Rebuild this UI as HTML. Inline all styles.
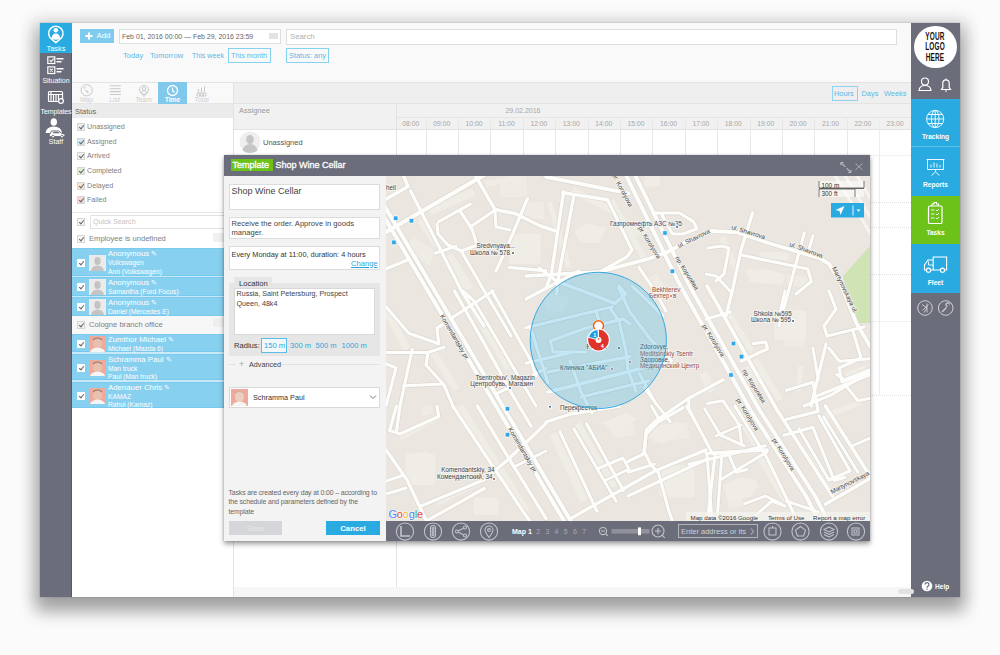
<!DOCTYPE html>
<html><head><meta charset="utf-8">
<style>
*{margin:0;padding:0;box-sizing:border-box}
html,body{width:1000px;height:655px;overflow:hidden;background:#fbfbfb;font-family:"Liberation Sans",sans-serif;}
.a{position:absolute}
#win{position:absolute;left:40px;top:23px;width:920px;height:574px;background:#fff;box-shadow:0 11px 16px 4px rgba(0,0,0,0.30),0 2px 14px 8px rgba(0,0,0,0.09),0 0 1px rgba(0,0,0,0.4);}
.sb{background:#6b6d7a}
.wt{color:#fff;font-weight:bold;text-align:center}
.lbl{font-size:7px}
.gray{color:#7a7a7a}
.chk{position:absolute;width:8px;height:8px;border:1px solid #d6d6d6;background:#f0f0f0}
.chk:after{content:"";position:absolute;left:2px;top:0px;width:2px;height:4px;border:solid #666;border-width:0 1px 1px 0;transform:rotate(40deg)}
.row{position:absolute;left:72px;width:152px;background:#88d0f0;border-top:1px solid #7acbee;border-bottom:1px solid #78c9ee}
.row .t{position:absolute;left:36px;color:#fff;font-size:7.5px;line-height:8.6px;white-space:nowrap}
.av{position:absolute;left:17px;width:17px;height:16px;background:#e9e9e9}
.hcol{position:absolute;top:117px;height:480px;border-left:1px solid #e6e6e6;}
.ht{position:absolute;top:119px;font-size:7px;color:#a0a0a0;width:32px;text-align:center}
</style></head><body>
<div id="win"></div>

<!-- LEFT SIDEBAR -->
<div class="a sb" style="left:40px;top:23px;width:32px;height:574px"></div>
<div class="a" style="left:40px;top:23px;width:32px;height:30px;background:#29abe2"></div>
<div class="a" style="left:71px;top:53px;width:1px;height:544px;background:#575965"></div>
<svg class="a" style="left:40px;top:23px" width="34" height="125">
 <path d="M15.85 19.6 L12.2 16.6 A7.2 7.2 0 1 1 19.5 16.6 Z" fill="none" stroke="#fff" stroke-width="1.5" stroke-linejoin="round"/>
 <circle cx="15.85" cy="7.3" r="2.3" fill="#fff"/>
 <path d="M11.6 15.2 q0.6-4.6 4.25-4.6 q3.65 0 4.25 4.6 q-2 1.6-4.25 1.6 q-2.25 0-4.25-1.6z" fill="#fff"/>
 <g fill="none" stroke="#fff" stroke-width="1.2">
  <rect x="7.8" y="33.9" width="7" height="6.6"/><path d="M9.6 37l1.6 1.6l2.6-3" stroke-width="1.1"/>
  <rect x="7.8" y="43.9" width="7" height="6.6"/><path d="M9.8 45.9l3 2.6M12.8 45.9l-3 2.6" stroke-width="1.1"/>
 </g>
 <g fill="#fff"><rect x="16.5" y="35" width="7" height="1.5"/><rect x="16.5" y="38" width="5" height="1.5"/><rect x="16.5" y="45" width="7" height="1.5"/><rect x="16.5" y="48" width="5" height="1.5"/></g>
 <g fill="none" stroke="#fff" stroke-width="1.2">
  <rect x="8.5" y="68.5" width="14" height="10" rx="1"/>
  <path d="M8.5 71.5h14M11 69v9.5M13.5 72v6.5M16 72v6.5M18.5 72v6.5"/>
  <circle cx="21" cy="78" r="2.4" fill="#6b6d7a"/>
 </g>
 <ellipse cx="13.8" cy="99" rx="3.2" ry="3.8" fill="#fff"/>
 <path d="M5.5 110 q0.8-6.5 8.3-6.5 q7.5 0 8.3 6.5z" fill="#fff"/>
 <path d="M9.5 111.5 l2.2-3.6 h7 l3.2 2.6 l3 0.7 v2.3 h-15.4z" fill="#fff" stroke="#6b6d7a" stroke-width="0.9"/>
 <path d="M12.5 110.3 l1.2-1.6 h4.5 l1.8 1.6z" fill="#6b6d7a"/>
 <circle cx="13" cy="113.6" r="1.3" fill="#fff" stroke="#6b6d7a" stroke-width="0.8"/><circle cx="22" cy="113.6" r="1.3" fill="#fff" stroke="#6b6d7a" stroke-width="0.8"/>
</svg>
<div class="a wt" style="left:36px;top:44px;width:40px;font-size:7.4px;line-height:9px;font-weight:normal">Tasks</div>
<div class="a wt" style="left:36px;top:76px;width:40px;font-size:7px;line-height:9px;font-weight:normal">Situation</div>
<div class="a wt" style="left:36px;top:106.5px;width:40px;font-size:7px;line-height:9px;font-weight:normal;letter-spacing:-0.1px">Templates</div>
<div class="a wt" style="left:36px;top:136.5px;width:40px;font-size:7px;line-height:9px;font-weight:normal">Staff</div>

<!-- RIGHT SIDEBAR -->
<div class="a sb" style="left:911px;top:23px;width:49px;height:574px"></div>
<div class="a" style="left:913.8px;top:25.5px;width:42.8px;height:42.8px;border-radius:50%;background:#fff"></div>
<div class="a" style="left:915px;top:32px;width:40px;text-align:center;font-size:10.4px;line-height:10.3px;font-weight:bold;color:#111;transform:scaleX(0.62);letter-spacing:0.3px">YOUR<br>LOGO<br>HERE</div>
<svg class="a" style="left:911px;top:75px" width="49" height="20" fill="none" stroke="#fff" stroke-width="1.2">
 <circle cx="14" cy="6.5" r="3.5"/><path d="M8 15.5 q0.5-5 6-5 q5.5 0 6 5z"/>
 <path d="M30.5 14.5 h9 l-1.3-2 v-4.5 a3.2 3.2 0 0 0 -6.4 0 v4.5 z"/><path d="M35 3.5v1.2M34 16h2"/>
</svg>
<div class="a" style="left:911px;top:99px;width:49px;height:48px;background:#29abe2;border-bottom:1px solid #5bc0eb"></div>
<div class="a" style="left:911px;top:147px;width:49px;height:49px;background:#29abe2"></div>
<div class="a" style="left:911px;top:196px;width:49px;height:48px;background:#6cc218"></div>
<div class="a" style="left:911px;top:244px;width:49px;height:49px;background:#29abe2"></div>
<svg class="a" style="left:911px;top:99px" width="49" height="220" fill="none" stroke="#fff" stroke-width="0.9">
 <circle cx="24.2" cy="20" r="8.6"/><ellipse cx="24.2" cy="20" rx="3.8" ry="8.6"/><path d="M24.2 11.4v17.2M15.6 20h17.2M16.8 15.5h14.8M16.8 24.5h14.8"/>
 <path d="M15.5 60.5h18M16.5 60.5v10h16v-10M24.5 70.5v2.5l-4 3.5M24.5 73l4 3.5M20 68.5v-3M23 68.5v-5M26 68.5v-4M29 68.5v-2.5"/>
 <rect x="17.5" y="107" width="13.5" height="17.5" rx="1.3" stroke-width="1.2"/><path d="M21 107v-2h2v-1.5h2.5v1.5h2v2" stroke-width="1.1"/>
 <path d="M20 111h3.5M20 115h3.5M20 119h3.5M25 111l1 1l2-2M25 115l1 1l2-2M25 119l1 1l2-2"/>
 <path d="M22.2 158h13.4v13h-13.4zM22.2 161h-5.2l-3.5 5v5h8.7" stroke-width="1.1"/><path d="M17.5 162.5v3.5h4.7"/>
 <circle cx="17.5" cy="171.2" r="2.1" fill="#29abe2" stroke-width="1.1"/><circle cx="31.5" cy="171.2" r="2.1" fill="#29abe2" stroke-width="1.1"/>
 <circle cx="14" cy="209" r="7.3" stroke="#d0d1d6" stroke-width="1"/><circle cx="34.7" cy="209" r="7.3" stroke="#d0d1d6" stroke-width="1"/>
 <path d="M11 205.5l5 3.5l-3 4.5M16 204.5v9M11.5 211.5l6-6" stroke="#d0d1d6"/>
 <path d="M31 213l4.5-4.5M36.5 207.5a1.8 1.8 0 1 1 2 -2" stroke="#d0d1d6" stroke-width="1.3"/>
</svg>
<div class="a wt" style="left:911px;top:132px;width:49px;font-size:6.6px;line-height:9px">Tracking</div>
<div class="a wt" style="left:911px;top:180px;width:49px;font-size:6.6px;line-height:9px">Reports</div>
<div class="a wt" style="left:911px;top:228px;width:49px;font-size:6.6px;line-height:9px">Tasks</div>
<div class="a wt" style="left:911px;top:278px;width:49px;font-size:6.6px;line-height:9px">Fleet</div>
<svg class="a" style="left:921px;top:580px" width="12" height="12"><circle cx="6" cy="6" r="5.3" fill="#fff"/><path d="M4 4.6a2 2 0 1 1 2.8 1.8c-0.6 0.3-0.8 0.7-0.8 1.4" stroke="#6b6d7a" stroke-width="1.2" fill="none"/><circle cx="6" cy="9.2" r="0.7" fill="#6b6d7a"/></svg>
<div class="a wt" style="left:935px;top:582px;font-size:6.6px;line-height:9px;text-align:left">Help</div>

<!-- TOP TOOLBAR -->
<div class="a" style="left:72px;top:23px;width:839px;height:59px;background:#f9f9f9"></div>
<div class="a" style="left:80px;top:29px;width:34px;height:14px;background:#7fcbee"></div>
<svg class="a" style="left:84px;top:31px" width="10" height="10"><path d="M5 1.5V8.5M1.5 5H8.5" stroke="#fff" stroke-width="2"/></svg>
<div class="a" style="left:96.5px;top:31px;font-size:7.8px;color:#fff;line-height:9px">Add</div>
<div class="a" style="left:119px;top:29px;width:162px;height:15px;background:#fff;border:1px solid #dedede"></div>
<div class="a" style="left:122px;top:32px;font-size:6.95px;color:#666;line-height:9px;white-space:nowrap">Feb 01, 2016 00:00 — Feb 29, 2016 23:59</div>
<div class="a" style="left:269px;top:33px;width:9px;height:6px;background:#e3e3e3"></div>
<div class="a" style="left:286px;top:29px;width:611px;height:16px;background:#fff;border:1px solid #dedede"></div>
<div class="a" style="left:290px;top:32px;font-size:7.8px;color:#b0b0b0;line-height:9px">Search</div>
<div class="a" style="left:123px;top:51px;font-size:7.6px;color:#5cb9e6;line-height:9px;white-space:nowrap">Today</div>
<div class="a" style="left:150px;top:51px;font-size:7.6px;color:#5cb9e6;line-height:9px;white-space:nowrap">Tomorrow</div>
<div class="a" style="left:192px;top:51.6px;font-size:7.1px;color:#5cb9e6;line-height:9px;white-space:nowrap">This week</div>
<div class="a" style="left:228px;top:48px;width:43px;height:15px;border:1px solid #86d0f0"></div>
<div class="a" style="left:231px;top:51px;font-size:7.3px;color:#5cb9e6;line-height:9px;white-space:nowrap">This month</div>
<div class="a" style="left:286px;top:48px;width:43px;height:15px;border:1px solid #86d0f0"></div>
<div class="a" style="left:289px;top:51px;font-size:7.4px;color:#5cb9e6;line-height:9px;white-space:nowrap">Status: any</div>

<!-- TAB BAR / PANEL -->
<div class="a" style="left:72px;top:82px;width:162px;height:515px;background:#fff;border-top:1px solid #e4e4e4"></div>
<div class="a" style="left:72px;top:82px;width:161px;height:22px;background:#f9f9f9;border-top:1px solid #e4e4e4;border-bottom:1px solid #e6e6e6"></div>
<div class="a" style="left:158px;top:82px;width:29px;height:22px;background:#80c8ec"></div>
<svg class="a" style="left:72px;top:83.5px" width="161" height="22">
 <g fill="none" stroke="#c9c9c9" stroke-width="1">
  <circle cx="14.7" cy="6.3" r="5.6"/><path d="M12 4.2l1.5-0.8M13.2 6.2l2.3 1.4l0.8 2" stroke-width="1.3"/>
  <path d="M37.8 1.8h11M37.8 4.7h11M37.8 7.6h11M37.8 10.5h11" stroke-width="1.1"/>
  <circle cx="72" cy="6" r="4.5"/><circle cx="72" cy="5" r="1.6"/><path d="M69.5 9a2.5 2.5 0 0 1 5 0M70 10.5l2 2l2-2"/>
  <path d="M126.5 5v3M129.5 3.5v4.5M132.5 2.5v5.5M125 9h3v3h-3zM128 9h3v3h-3zM131 9h3v3h-3z"/>
 </g>
 <g fill="none" stroke="#fff" stroke-width="1.3">
  <circle cx="100.5" cy="6.5" r="5"/><path d="M100.5 3.5v3l2 2"/>
 </g>
</svg>
<div class="a" style="left:72px;top:95.5px;width:29px;text-align:center;font-size:6.8px;color:#cfcfcf;line-height:8px">Map</div>
<div class="a" style="left:100px;top:95.5px;width:29px;text-align:center;font-size:6.8px;color:#cfcfcf;line-height:8px">List</div>
<div class="a" style="left:129px;top:95.5px;width:29px;text-align:center;font-size:6.8px;color:#cfcfcf;line-height:8px">Team</div>
<div class="a" style="left:158px;top:95.5px;width:29px;text-align:center;font-size:6.8px;color:#fff;line-height:8px;font-weight:bold">Time</div>
<div class="a" style="left:187px;top:95.5px;width:29px;text-align:center;font-size:6.8px;color:#cfcfcf;line-height:8px">Total</div>
<div class="a" style="left:72px;top:104px;width:161px;height:14px;background:#ebebeb"></div>
<div class="a" style="left:75px;top:107px;font-size:7.5px;color:#666;line-height:9px">Status</div>
<div class="chk" style="left:77px;top:123.0px;background:#ececec"></div>
<div class="a" style="left:87px;top:123.1px;font-size:7.15px;color:#808080;line-height:9px">Unassigned</div>
<div class="chk" style="left:77px;top:137.5px;background:#cfe9f7"></div>
<div class="a" style="left:87px;top:137.6px;font-size:7.15px;color:#808080;line-height:9px">Assigned</div>
<div class="chk" style="left:77px;top:152.0px;background:#eeeeee"></div>
<div class="a" style="left:87px;top:152.1px;font-size:7.15px;color:#808080;line-height:9px">Arrived</div>
<div class="chk" style="left:77px;top:166.5px;background:#def0d4"></div>
<div class="a" style="left:87px;top:166.6px;font-size:7.15px;color:#808080;line-height:9px">Completed</div>
<div class="chk" style="left:77px;top:181.5px;background:#f9e3d2"></div>
<div class="a" style="left:87px;top:181.6px;font-size:7.15px;color:#808080;line-height:9px">Delayed</div>
<div class="chk" style="left:77px;top:196.0px;background:#f7d9d3"></div>
<div class="a" style="left:87px;top:196.1px;font-size:7.15px;color:#808080;line-height:9px">Failed</div>
<div class="a" style="left:72px;top:212px;width:161px;height:1px;background:#e6e6e6"></div>
<div class="chk" style="left:77px;top:218px;background:#f6f6f6"></div>
<div class="a" style="left:90px;top:215px;width:143px;height:14px;background:#fff;border:1px solid #e2e2e2"></div>
<div class="a" style="left:93px;top:218px;font-size:7.1px;color:#c4c4c4;line-height:9px">Quick Search</div>
<div class="chk" style="left:77px;top:234.5px;background:#f6f6f6"></div>
<div class="a" style="left:89px;top:234px;font-size:7.6px;color:#808080;line-height:9px">Employee is undefined</div>
<div class="a" style="left:72px;top:248px;width:152px;height:159.5px;background:#c9e9f8"></div>
<div class="row" style="top:248.0px;height:27.5px"><div class="chk" style="left:5px;top:9.8px;background:#fff;border-color:#fff"></div><svg class="a" style="left:17px;top:5.8px" width="17" height="16"><rect width="17" height="16" fill="#ebebeb"/><ellipse cx="8.5" cy="6" rx="3.2" ry="4" fill="#c4c4c4"/><path d="M2 16q0.5-5 6.5-5.5q6 0.5 6.5 5.5z" fill="#c4c4c4"/></svg><div class="t" style="font-size:7.8px;top:1.3px">Anonymous <span style="font-size:7px">&#9998;</span></div><div class="t" style="font-size:6.7px;top:10.0px">Volkswagen</div><div class="t" style="font-size:6.7px;top:18.7px">Ann (Volkswagen)</div></div>
<div class="row" style="top:277.0px;height:18.5px"><div class="chk" style="left:5px;top:5.2px;background:#fff;border-color:#fff"></div><svg class="a" style="left:17px;top:1.2px" width="17" height="16"><rect width="17" height="16" fill="#ebebeb"/><ellipse cx="8.5" cy="6" rx="3.2" ry="4" fill="#c4c4c4"/><path d="M2 16q0.5-5 6.5-5.5q6 0.5 6.5 5.5z" fill="#c4c4c4"/></svg><div class="t" style="font-size:7.8px;top:1.3px">Anonymous <span style="font-size:7px">&#9998;</span></div><div class="t" style="font-size:6.7px;top:10.0px">Samantha (Ford Focus)</div></div>
<div class="row" style="top:297.0px;height:18.5px"><div class="chk" style="left:5px;top:5.2px;background:#fff;border-color:#fff"></div><svg class="a" style="left:17px;top:1.2px" width="17" height="16"><rect width="17" height="16" fill="#ebebeb"/><ellipse cx="8.5" cy="6" rx="3.2" ry="4" fill="#c4c4c4"/><path d="M2 16q0.5-5 6.5-5.5q6 0.5 6.5 5.5z" fill="#c4c4c4"/></svg><div class="t" style="font-size:7.8px;top:1.3px">Anonymous <span style="font-size:7px">&#9998;</span></div><div class="t" style="font-size:6.7px;top:10.0px">Daniel (Mercedes E)</div></div>
<div class="row" style="top:333.5px;height:18.0px"><div class="chk" style="left:5px;top:5.0px;background:#fff;border-color:#fff"></div><svg class="a" style="left:17px;top:1.0px" width="17" height="16"><rect width="17" height="16" fill="#f0a99a"/><ellipse cx="8.5" cy="7" rx="4.5" ry="5.5" fill="#e8c0b0"/><path d="M4 4.5q4.5-4 9 0v-1.5q-4.5-3-9 0z" fill="#8a7565"/><path d="M1 16q1-4 7.5-4.5q6.5 0.5 7.5 4.5z" fill="#f5f5f5"/></svg><div class="t" style="font-size:7.8px;top:1.3px">Zumthor Michael <span style="font-size:7px">&#9998;</span></div><div class="t" style="font-size:6.7px;top:10.0px">Michael (Mazda 6)</div></div>
<div class="row" style="top:353.5px;height:26.0px"><div class="chk" style="left:5px;top:9.0px;background:#fff;border-color:#fff"></div><svg class="a" style="left:17px;top:5.0px" width="17" height="16"><rect width="17" height="16" fill="#f0a99a"/><ellipse cx="8.5" cy="7" rx="4.5" ry="5.5" fill="#e8c0b0"/><path d="M4 4.5q4.5-4 9 0v-1.5q-4.5-3-9 0z" fill="#8a7565"/><path d="M1 16q1-4 7.5-4.5q6.5 0.5 7.5 4.5z" fill="#f5f5f5"/></svg><div class="t" style="font-size:7.8px;top:1.3px">Schramma Paul <span style="font-size:7px">&#9998;</span></div><div class="t" style="font-size:6.7px;top:10.0px">Man truck</div><div class="t" style="font-size:6.7px;top:18.7px">Paul (Man truck)</div></div>
<div class="row" style="top:381.5px;height:26.0px"><div class="chk" style="left:5px;top:9.0px;background:#fff;border-color:#fff"></div><svg class="a" style="left:17px;top:5.0px" width="17" height="16"><rect width="17" height="16" fill="#f0a99a"/><ellipse cx="8.5" cy="7" rx="4.5" ry="5.5" fill="#e8c0b0"/><path d="M4 4.5q4.5-4 9 0v-1.5q-4.5-3-9 0z" fill="#8a7565"/><path d="M1 16q1-4 7.5-4.5q6.5 0.5 7.5 4.5z" fill="#f5f5f5"/></svg><div class="t" style="font-size:7.8px;top:1.3px">Adenauer Chris <span style="font-size:7px">&#9998;</span></div><div class="t" style="font-size:6.7px;top:10.0px">KAMAZ</div><div class="t" style="font-size:6.7px;top:18.7px">Rahul (Kamaz)</div></div>
<div class="a" style="left:72px;top:315.5px;width:152px;height:18px;background:#f7f7f7"></div>
<div class="a" style="left:213px;top:318px;width:11px;height:9px;background:#eeeeee"></div>
<div class="a" style="left:213px;top:233px;width:11px;height:9px;background:#f0f0f0"></div>
<div class="chk" style="left:77px;top:320.5px;background:#f0f0f0"></div>
<div class="a" style="left:89px;top:320px;font-size:7.6px;color:#808080;line-height:9px">Cologne branch office</div>
<!-- TIMELINE -->
<div class="a" style="left:233px;top:82px;width:678px;height:22px;background:#efefef;border-top:1px solid #e2e2e2;border-left:1px solid #e2e2e2;border-bottom:1px solid #e4e4e4"></div>
<div class="a" style="left:831.5px;top:85.5px;width:26px;height:15px;border:1px solid #8fd3f1"></div>
<div class="a" style="left:834px;top:88.5px;font-size:7.4px;color:#5cb9e6;line-height:9px">Hours</div>
<div class="a" style="left:861.5px;top:88.5px;font-size:7.4px;color:#5cb9e6;line-height:9px">Days</div>
<div class="a" style="left:884px;top:88.5px;font-size:7.4px;color:#5cb9e6;line-height:9px">Weeks</div>
<div class="a" style="left:233px;top:104px;width:678px;height:26px;background:#f1f1f1;border-bottom:1px solid #e2e2e2;border-left:1px solid #e2e2e2"></div>
<div class="a" style="left:396px;top:117px;width:515px;height:1px;background:#e4e4e4"></div>
<div class="a" style="left:239px;top:106px;font-size:7.5px;color:#9a9a9a;line-height:9px">Assignee</div>
<div class="a" style="left:500px;top:106px;width:46px;font-size:7px;color:#a8a8a8;line-height:9px;text-align:center">29.02.2016</div>
<div class="a" style="left:396px;top:104px;width:1px;height:493px;background:#e2e2e2"></div>
<div class="a" style="left:396.0px;top:119.5px;width:29.5px;text-align:center;font-size:6.8px;color:#a8a8a8;line-height:8px">08:00</div>
<div class="a" style="left:425.5px;top:117px;width:1px;height:38px;background:#e8e8e8"></div>
<div class="a" style="left:425.5px;top:119.5px;width:32.4px;text-align:center;font-size:6.8px;color:#a8a8a8;line-height:8px">09:00</div>
<div class="a" style="left:457.9px;top:117px;width:1px;height:38px;background:#e8e8e8"></div>
<div class="a" style="left:457.9px;top:119.5px;width:32.4px;text-align:center;font-size:6.8px;color:#a8a8a8;line-height:8px">10:00</div>
<div class="a" style="left:490.3px;top:117px;width:1px;height:38px;background:#e8e8e8"></div>
<div class="a" style="left:490.3px;top:119.5px;width:32.4px;text-align:center;font-size:6.8px;color:#a8a8a8;line-height:8px">11:00</div>
<div class="a" style="left:522.7px;top:117px;width:1px;height:38px;background:#e8e8e8"></div>
<div class="a" style="left:522.7px;top:119.5px;width:32.4px;text-align:center;font-size:6.8px;color:#a8a8a8;line-height:8px">12:00</div>
<div class="a" style="left:555.1px;top:117px;width:1px;height:38px;background:#e8e8e8"></div>
<div class="a" style="left:555.1px;top:119.5px;width:32.4px;text-align:center;font-size:6.8px;color:#a8a8a8;line-height:8px">13:00</div>
<div class="a" style="left:587.5px;top:117px;width:1px;height:38px;background:#e8e8e8"></div>
<div class="a" style="left:587.5px;top:119.5px;width:32.4px;text-align:center;font-size:6.8px;color:#a8a8a8;line-height:8px">14:00</div>
<div class="a" style="left:619.9px;top:117px;width:1px;height:38px;background:#e8e8e8"></div>
<div class="a" style="left:619.9px;top:119.5px;width:32.4px;text-align:center;font-size:6.8px;color:#a8a8a8;line-height:8px">15:00</div>
<div class="a" style="left:652.3px;top:117px;width:1px;height:38px;background:#e8e8e8"></div>
<div class="a" style="left:652.3px;top:119.5px;width:32.4px;text-align:center;font-size:6.8px;color:#a8a8a8;line-height:8px">16:00</div>
<div class="a" style="left:684.7px;top:117px;width:1px;height:38px;background:#e8e8e8"></div>
<div class="a" style="left:684.7px;top:119.5px;width:32.4px;text-align:center;font-size:6.8px;color:#a8a8a8;line-height:8px">17:00</div>
<div class="a" style="left:717.1px;top:117px;width:1px;height:38px;background:#e8e8e8"></div>
<div class="a" style="left:717.1px;top:119.5px;width:32.4px;text-align:center;font-size:6.8px;color:#a8a8a8;line-height:8px">18:00</div>
<div class="a" style="left:749.5px;top:117px;width:1px;height:38px;background:#e8e8e8"></div>
<div class="a" style="left:749.5px;top:119.5px;width:32.4px;text-align:center;font-size:6.8px;color:#a8a8a8;line-height:8px">19:00</div>
<div class="a" style="left:781.9px;top:117px;width:1px;height:38px;background:#e8e8e8"></div>
<div class="a" style="left:781.9px;top:119.5px;width:32.4px;text-align:center;font-size:6.8px;color:#a8a8a8;line-height:8px">20:00</div>
<div class="a" style="left:814.3px;top:117px;width:1px;height:38px;background:#e8e8e8"></div>
<div class="a" style="left:814.3px;top:119.5px;width:32.4px;text-align:center;font-size:6.8px;color:#a8a8a8;line-height:8px">21:00</div>
<div class="a" style="left:846.7px;top:117px;width:1px;height:38px;background:#e8e8e8"></div>
<div class="a" style="left:846.7px;top:119.5px;width:32.4px;text-align:center;font-size:6.8px;color:#a8a8a8;line-height:8px">22:00</div>
<div class="a" style="left:879.1px;top:117px;width:1px;height:38px;background:#e8e8e8"></div>
<div class="a" style="left:879.1px;top:119.5px;width:31.9px;text-align:center;font-size:6.8px;color:#a8a8a8;line-height:8px">23:00</div>
<div class="a" style="left:878.8px;top:117px;width:1px;height:278px;background:#ececec"></div>
<div class="a" style="left:233px;top:202.0px;width:678px;height:0;border-top:1px dotted #e2e2e2"></div>
<div class="a" style="left:233px;top:227.0px;width:678px;height:0;border-top:1px dotted #e2e2e2"></div>
<div class="a" style="left:233px;top:274.0px;width:678px;height:0;border-top:1px dotted #e2e2e2"></div>
<div class="a" style="left:233px;top:321.0px;width:678px;height:0;border-top:1px dotted #e2e2e2"></div>
<div class="a" style="left:233px;top:394.6px;width:678px;height:0;border-top:1px dotted #e2e2e2"></div>

<div class="a" style="left:233px;top:155px;width:678px;height:1px;background:#f0f0f0"></div>
<svg class="a" style="left:239px;top:131px" width="22" height="22"><circle cx="11" cy="11" r="10.5" fill="#efefef"/><ellipse cx="11" cy="8.5" rx="3.8" ry="4.6" fill="#c6c6c6"/><path d="M3.5 19.5q1-6 7.5-6.5q6.5 0.5 7.5 6.5q-3 2.5-7.5 2.5q-4.5 0-7.5-2.5z" fill="#c6c6c6"/></svg>
<div class="a" style="left:263px;top:138px;font-size:7.5px;color:#555;line-height:9px">Unassigned</div>
<div class="a" style="left:233px;top:587px;width:678px;height:10px;background:#f6f6f6"></div>
<div class="a" style="left:233px;top:130px;width:1px;height:467px;background:#e4e4e4"></div>
<div class="a" style="left:898px;top:588.5px;width:16px;height:5px;border-radius:3px;background:#e2e2e2"></div>

<!-- MODAL -->
<div class="a" style="left:224px;top:155px;width:646px;height:386px;background:#f3f3f3;box-shadow:0 3px 5px rgba(0,0,0,0.38),0 0 2px rgba(0,0,0,0.2)"></div>
<div class="a sb" style="left:224px;top:155px;width:646px;height:21px"></div>
<div class="a" style="left:231px;top:159px;width:42px;height:12px;background:#6cc117"></div>
<div class="a" style="left:232.5px;top:160px;font-size:9px;color:#fff;line-height:11px;white-space:nowrap;-webkit-text-stroke:0.3px #fff">Template</div>
<div class="a" style="left:275.5px;top:160px;font-size:9px;color:#fff;line-height:11px;white-space:nowrap;-webkit-text-stroke:0.3px #fff">Shop Wine Cellar</div>
<svg class="a" style="left:838px;top:159px" width="30" height="16"><g stroke="#b4b6bf" stroke-width="1.1" fill="none"><path d="M2.8 3.5l4.6 4.5M2.8 3.5v2.8M2.8 3.5h2.8M8.6 9.2l4.4 4.3M13 13.5v-2.8M13 13.5h-2.8"/><path d="M17.5 4.4l7 6.6M24.5 4.4l-7 6.6" stroke-width="0.9"/></g></svg>
<!-- form -->
<div class="a" style="left:228.5px;top:183.5px;width:151px;height:26px;background:#fff;border:1px solid #dcdcdc"></div>
<div class="a" style="left:231.5px;top:186px;font-size:9px;color:#444;line-height:11px;white-space:nowrap">Shop Wine Cellar</div>
<div class="a" style="left:228.5px;top:217px;width:151px;height:21.5px;background:#fff;border:1px solid #dcdcdc"></div>
<div class="a" style="left:231.5px;top:219px;width:146px;font-size:7.6px;color:#444;line-height:9.2px">Receive the order. Approve in goods manager.</div>
<div class="a" style="left:228.5px;top:246px;width:151px;height:24px;background:#fff;border:1px solid #dcdcdc"></div>
<div class="a" style="left:231.5px;top:249.5px;font-size:7.35px;color:#333;line-height:9px;white-space:nowrap">Every Monday at 11:00, duration: 4 hours</div>
<div class="a" style="left:351px;top:258.5px;font-size:7.6px;color:#2ea6dd;line-height:9px;text-decoration:underline">Change</div>
<div class="a" style="left:228.5px;top:282.5px;width:151px;height:73px;background:#e6e6e6"></div>
<div class="a" style="left:234px;top:277px;width:37.5px;height:7px;background:#e6e6e6"></div>
<div class="a" style="left:239px;top:278.5px;font-size:7.6px;color:#333;line-height:9px">Location</div>
<div class="a" style="left:234px;top:288px;width:140.5px;height:46.5px;background:#fff;border:1px solid #d8d8d8"></div>
<div class="a" style="left:236.5px;top:290px;width:138px;font-size:7.15px;color:#444;line-height:9.5px;white-space:nowrap">Russia, Saint Petersburg, Prospect<br>Queen, 48k4</div>
<div class="a" style="left:234px;top:341px;font-size:7.6px;color:#333;line-height:9px">Radius:</div>
<div class="a" style="left:261px;top:337.5px;width:26px;height:15px;border:1px solid #5cbde8;background:#f2f7fa"></div>
<div class="a" style="left:264px;top:341px;font-size:7.6px;color:#2ea6dd;line-height:9px;white-space:nowrap">150 m</div>
<div class="a" style="left:290px;top:341px;font-size:7.6px;color:#2ea6dd;line-height:9px;white-space:nowrap">300 m</div>
<div class="a" style="left:315.5px;top:341px;font-size:7.6px;color:#2ea6dd;line-height:9px;white-space:nowrap">500 m</div>
<div class="a" style="left:341.5px;top:341px;font-size:7.6px;color:#2ea6dd;line-height:9px;white-space:nowrap">1000 m</div>
<div class="a" style="left:229px;top:364px;width:150px;height:1px;background:#e2e2e2"></div>
<div class="a" style="left:236px;top:360px;width:45px;height:9px;background:#f3f3f3"></div>
<div class="a" style="left:239px;top:359.5px;font-size:9px;color:#aaa;line-height:9px">+</div>
<div class="a" style="left:249px;top:360px;font-size:7.2px;color:#444;line-height:9px">Advanced</div>
<div class="a" style="left:228.5px;top:387px;width:151px;height:20.5px;background:#fff;border:1px solid #d8d8d8"></div>
<svg class="a" style="left:231px;top:389px" width="17" height="17"><rect width="17" height="17" fill="#f0a99a"/><ellipse cx="8.5" cy="7.5" rx="4.5" ry="5.5" fill="#eccfc2"/><path d="M4 5q4.5-4 9 0v-1.5q-4.5-3-9 0z" fill="#bdb4ad"/><path d="M1 17q1-4 7.5-4.5q6.5 0.5 7.5 4.5z" fill="#f5f5f5"/></svg>
<div class="a" style="left:253px;top:393px;font-size:7.25px;color:#333;line-height:9px">Schramma Paul</div>
<svg class="a" style="left:369px;top:394px" width="8" height="6"><path d="M1 1.5l3 3l3-3" stroke="#777" stroke-width="1" fill="none"/></svg>
<div class="a" style="left:228.5px;top:487.8px;font-size:6.9px;color:#666;line-height:9.4px;white-space:nowrap;letter-spacing:-0.12px">Tasks are created every day at 0:00 – according to<br>the schedule and parameters defined by the<br>template</div>
<div class="a" style="left:228.5px;top:521px;width:53.5px;height:14px;background:#d5d6da"></div>
<div class="a" style="left:228.5px;top:523.5px;width:53.5px;text-align:center;font-size:7.5px;color:#e8e8ea;line-height:9px">Save</div>
<div class="a" style="left:326px;top:521px;width:54px;height:14px;background:#29abe2"></div>
<div class="a" style="left:326px;top:523.5px;width:54px;text-align:center;font-size:7.8px;color:#fff;line-height:9px;font-weight:bold">Cancel</div>
<!-- MAP -->
<svg class="a" style="left:386px;top:176px" width="484" height="345" viewBox="0 0 484 345" font-family="Liberation Sans, sans-serif">
<rect width="484" height="345" fill="#ebe7e0"/>
<path d="M114.0 4.0 L141.0 4.0 L141.0 21.0 L114.0 21.0 Z" fill="#efece6"/>
<path d="M136.0 26.0 L158.0 26.0 L158.0 43.0 L136.0 43.0 Z" fill="#efece6"/>
<path d="M125.0 58.0 L148.0 58.0 L148.0 86.0 L125.0 86.0 Z" fill="#efece6"/>
<path d="M27.0 60.0 L48.0 75.0 L44.0 90.0 L22.0 75.0 Z" fill="#efece6"/>
<path d="M63.0 83.0 L82.0 112.0 L76.0 116.0 L58.0 88.0 Z" fill="#efece6"/>
<path d="M258.0 104.0 L270.0 98.0 L278.0 108.0 L268.0 114.0 Z" fill="#efece6"/>
<path d="M240.0 52.0 L260.0 43.0 L264.0 55.0 L244.0 63.0 Z" fill="#efece6"/>
<path d="M398.0 150.0 L420.0 152.0 L418.0 172.0 L398.0 170.0 Z" fill="#efece6"/>
<path d="M402.0 98.0 L422.0 102.0 L419.0 112.0 L400.0 108.0 Z" fill="#efece6"/>
<path d="M360.0 94.0 L370.0 93.0 L372.0 100.0 L362.0 101.0 Z" fill="#efece6"/>
<path d="M20.0 280.0 L40.0 275.0 L45.0 300.0 L24.0 305.0 Z" fill="#efece6"/>
<path d="M35.0 232.0 L45.0 229.0 L47.0 237.0 L37.0 240.0 Z" fill="#efece6"/>
<path d="M285.0 292.0 L308.0 290.0 L308.0 308.0 L286.0 310.0 Z" fill="#efece6"/>
<path d="M225.0 246.0 L245.0 239.0 L249.0 258.0 L227.0 263.0 Z" fill="#efece6"/>
<path d="M265.0 250.0 L300.0 246.0 L304.0 262.0 L268.0 266.0 Z" fill="#efece6"/>
<path d="M340.0 318.0 L355.0 313.0 L357.0 330.0 L343.0 333.0 Z" fill="#efece6"/>
<path d="M43.9 35.1 L87.8 15.8" stroke="#f0ede7" stroke-width="8.0" fill="none"/>
<path d="M33.4 43.9 L51.0 70.2" stroke="#f0ede7" stroke-width="6.0" fill="none"/>
<path d="M63.2 79.0 L84.3 112.4" stroke="#f0ede7" stroke-width="7.0" fill="none"/>
<path d="M186.3 14.0 L226.7 35.1" stroke="#f0ede7" stroke-width="6.0" fill="none"/>
<path d="M163.5 26.3 L182.8 91.3" stroke="#f0ede7" stroke-width="5.0" fill="none"/>
<path d="M225.0 24.6 L258.4 82.5" stroke="#f0ede7" stroke-width="6.0" fill="none"/>
<path d="M335.8 61.5 L351.6 96.6" stroke="#f0ede7" stroke-width="6.0" fill="none"/>
<path d="M86.0 129.0 L123.0 192.3" stroke="#f0ede7" stroke-width="8.0" fill="none"/>
<path d="M0.0 134.0 L21.0 173.0" stroke="#f0ede7" stroke-width="7.0" fill="none"/>
<path d="M47.4 176.5 L70.2 213.4" stroke="#f0ede7" stroke-width="7.0" fill="none"/>
<path d="M73.8 230.0 L140.5 335.4" stroke="#f0ede7" stroke-width="7.0" fill="none"/>
<path d="M14.0 261.6 L52.7 240.5" stroke="#f0ede7" stroke-width="6.0" fill="none"/>
<path d="M51.0 326.6 L98.3 303.8" stroke="#f0ede7" stroke-width="6.0" fill="none"/>
<path d="M167.0 258.0 L198.6 324.8" stroke="#f0ede7" stroke-width="8.0" fill="none"/>
<path d="M191.6 247.6 L228.5 310.8" stroke="#f0ede7" stroke-width="6.0" fill="none"/>
<path d="M342.8 137.8 L365.7 174.7" stroke="#f0ede7" stroke-width="6.0" fill="none"/>
<path d="M369.0 183.5 L393.7 223.9" stroke="#f0ede7" stroke-width="6.0" fill="none"/>
<path d="M346.3 230.0 L371.0 270.4" stroke="#f0ede7" stroke-width="6.0" fill="none"/>
<path d="M372.7 279.0 L402.5 328.3" stroke="#f0ede7" stroke-width="7.0" fill="none"/>
<path d="M421.8 279.0 L443.0 314.3" stroke="#f0ede7" stroke-width="7.0" fill="none"/>
<path d="M440.0 240.0 L475.0 226.0" stroke="#f0ede7" stroke-width="6.0" fill="none"/>
<path d="M415.0 190.0 L412.0 215.0" stroke="#f0ede7" stroke-width="5.0" fill="none"/>
<path d="M460.0 200.0 L480.0 192.0" stroke="#f0ede7" stroke-width="6.0" fill="none"/>
<path d="M100.0 8.0 L140.0 0.0" stroke="#f0ede7" stroke-width="6.0" fill="none"/>
<path d="M258.4 0.0 L274.2 0.0 L274.2 10.5 L258.4 10.5 Z" fill="#f0ede7"/>
<path d="M188.0 55.0 L200.0 47.4 L219.7 52.0 L214.0 66.7 L195.0 66.7 Z" fill="#f0ede7"/>
<path d="M374.4 75.5 L402.5 77.0 L402.5 84.3 L374.4 83.0 Z" fill="#f0ede7"/>
<path d="M360.4 96.0 L380.0 93.0 L399.0 99.0 L396.0 108.9 L364.0 106.0 Z" fill="#f0ede7"/>
<path d="M19.3 277.4 L49.2 277.4 L49.2 309.0 L19.3 309.0 Z" fill="#f0ede7"/>
<path d="M87.8 321.3 L112.4 321.3 L112.4 338.9 L87.8 338.9 Z" fill="#f0ede7"/>
<path d="M216.2 247.0 L240.0 237.0 L251.3 243.0 L228.0 258.0 Z" fill="#f0ede7"/>
<path d="M265.4 255.8 L290.0 245.8 L300.5 252.0 L276.0 268.6 Z" fill="#f0ede7"/>
<path d="M276.0 289.7 L307.5 289.7 L307.5 321.3 L276.0 321.3 Z" fill="#f0ede7"/>
<path d="M388.5 134.3 L420.0 134.3 L420.0 164.2 L388.5 164.2 Z" fill="#f0ede7"/>
<path d="M337.6 313.0 L360.0 303.8 L374.4 310.0 L350.0 324.8 Z" fill="#f0ede7"/>
<path d="M123.0 58.0 L154.5 58.0 L154.5 87.8 L123.0 87.8 Z" fill="#f0ede7"/>
<path d="M158.0 122.0 L170.0 116.0 L184.0 122.0 L176.0 136.0 L160.0 134.0 Z" fill="#f0ede7"/>
<path d="M263.1 259.2 L273.7 248.6 L284.3 251.3 L294.8 246.0 L300.1 251.3 L286.9 261.8 L268.4 267.1 Z" fill="#f0ede7"/>
<path d="M273.7 290.9 L308.1 290.9 L308.1 320.0 L273.7 320.0 Z" fill="#f0ede7"/>
<path d="M337.1 309.4 L353.0 301.5 L371.5 304.1 L366.2 320.0 L342.4 325.2 Z" fill="#f0ede7"/>
<path d="M313.3 198.4 L321.3 195.8 L329.2 214.3 L321.3 216.9 Z" fill="#f0ede7"/>
<path d="M355.6 193.1 L366.2 187.9 L379.4 203.7 L371.5 209.0 Z" fill="#f0ede7"/>
<path d="M448 -2 L486 60 M458 -2 L486 44 M470 -2 L486 25" stroke="#f6f4f0" stroke-width="3" fill="none"/>
<path d="M484 70 L457 100 L461 115 L470 147 L484 147 Z" fill="#cfe3b5"/>
<path d="M-20.2 10.0 L186.9 360.0" stroke="#dbd7cf" stroke-width="5.3" fill="none" stroke-linecap="round" stroke-linejoin="round"/>
<path d="M-13.4 10.0 L193.7 360.0" stroke="#dbd7cf" stroke-width="5.3" fill="none" stroke-linecap="round" stroke-linejoin="round"/>
<path d="M235.4 -10.0 L294.4 110.0 L364.4 234.0 L419.9 320.0 L440.4 360.0" stroke="#dbd7cf" stroke-width="5.3" fill="none" stroke-linecap="round" stroke-linejoin="round"/>
<path d="M244.6 -10.0 L303.6 110.0 L373.6 234.0 L429.1 320.0 L449.6 360.0" stroke="#dbd7cf" stroke-width="5.3" fill="none" stroke-linecap="round" stroke-linejoin="round"/>
<path d="M321.0 110.0 L391.0 234.0 L446.5 320.0" stroke="#dbd7cf" stroke-width="4.9" fill="none" stroke-linecap="round" stroke-linejoin="round"/>
<path d="M281.4 76.0 L300.0 66.0 L326.0 55.0 L352.0 56.4 L381.5 66.7 L434.0 82.5 L443.0 87.8 L453.5 105.4 L470.3 147.0 L490.0 180.0" stroke="#dbd7cf" stroke-width="5.1" fill="none" stroke-linecap="round" stroke-linejoin="round"/>
<path d="M439.4 230.0 L484.0 300.0" stroke="#dbd7cf" stroke-width="4.9" fill="none" stroke-linecap="round" stroke-linejoin="round"/>
<path d="M439.4 328.3 L490.0 299.0" stroke="#dbd7cf" stroke-width="4.9" fill="none" stroke-linecap="round" stroke-linejoin="round"/>
<path d="M-5.0 59.0 L100.0 -2.0" stroke="#dbd7cf" stroke-width="5.5" fill="none" stroke-linecap="round" stroke-linejoin="round"/>
<path d="M-5.0 26.0 L22.0 10.5 L16.7 -2.0" stroke="#dbd7cf" stroke-width="4.9" fill="none" stroke-linecap="round" stroke-linejoin="round"/>
<path d="M-5.0 95.0 L21.0 84.3" stroke="#dbd7cf" stroke-width="4.7" fill="none" stroke-linecap="round" stroke-linejoin="round"/>
<path d="M160.0 0.9 L242.5 17.4" stroke="#dbd7cf" stroke-width="5.1" fill="none" stroke-linecap="round" stroke-linejoin="round"/>
<path d="M89.6 0.0 L108.9 33.4 L130.0 37.8 L154.5 50.0 L170.0 55.0" stroke="#dbd7cf" stroke-width="4.9" fill="none" stroke-linecap="round" stroke-linejoin="round"/>
<path d="M24.6 14.9 L75.5 115.0 L98.0 150.0" stroke="#dbd7cf" stroke-width="4.7" fill="none" stroke-linecap="round" stroke-linejoin="round"/>
<path d="M52.7 45.7 L84.3 28.1" stroke="#dbd7cf" stroke-width="4.5" fill="none" stroke-linecap="round" stroke-linejoin="round"/>
<path d="M84.3 51.0 L108.9 34.2" stroke="#dbd7cf" stroke-width="4.5" fill="none" stroke-linecap="round" stroke-linejoin="round"/>
<path d="M51.0 48.0 L52.0 58.0 L62.0 69.0 L75.5 75.0" stroke="#dbd7cf" stroke-width="4.5" fill="none" stroke-linecap="round" stroke-linejoin="round"/>
<path d="M75.5 75.0 L91.0 69.0 L86.0 53.0 L74.0 35.0" stroke="#dbd7cf" stroke-width="4.5" fill="none" stroke-linecap="round" stroke-linejoin="round"/>
<path d="M49.0 77.3 L70.2 70.2" stroke="#dbd7cf" stroke-width="4.5" fill="none" stroke-linecap="round" stroke-linejoin="round"/>
<path d="M75.5 75.5 L98.3 115.0 L125.0 160.0" stroke="#dbd7cf" stroke-width="4.5" fill="none" stroke-linecap="round" stroke-linejoin="round"/>
<path d="M141.4 22.8 L123.0 66.7 L110.0 95.0" stroke="#dbd7cf" stroke-width="4.7" fill="none" stroke-linecap="round" stroke-linejoin="round"/>
<path d="M109.0 35.0 L110.0 51.0 L124.0 54.0" stroke="#dbd7cf" stroke-width="4.3" fill="none" stroke-linecap="round" stroke-linejoin="round"/>
<path d="M123.0 91.3 L160.0 94.8" stroke="#dbd7cf" stroke-width="4.5" fill="none" stroke-linecap="round" stroke-linejoin="round"/>
<path d="M140.0 123.0 L193.0 95.0" stroke="#dbd7cf" stroke-width="4.7" fill="none" stroke-linecap="round" stroke-linejoin="round"/>
<path d="M140.0 151.8 L226.3 130.7" stroke="#dbd7cf" stroke-width="4.5" fill="none" stroke-linecap="round" stroke-linejoin="round"/>
<path d="M164.4 165.0 L200.0 152.0 L237.4 142.9 L244.0 148.0" stroke="#dbd7cf" stroke-width="4.5" fill="none" stroke-linecap="round" stroke-linejoin="round"/>
<path d="M140.0 187.2 L186.5 176.1" stroke="#dbd7cf" stroke-width="4.5" fill="none" stroke-linecap="round" stroke-linejoin="round"/>
<path d="M162.0 196.0 L244.0 180.6" stroke="#dbd7cf" stroke-width="4.5" fill="none" stroke-linecap="round" stroke-linejoin="round"/>
<path d="M162.0 216.0 L285.0 185.0" stroke="#dbd7cf" stroke-width="4.7" fill="none" stroke-linecap="round" stroke-linejoin="round"/>
<path d="M195.0 221.0 L262.0 205.0" stroke="#dbd7cf" stroke-width="4.5" fill="none" stroke-linecap="round" stroke-linejoin="round"/>
<path d="M153.3 92.0 L171.0 105.3 L206.4 118.6 L228.6 127.4 L240.0 118.0 L233.0 110.0" stroke="#dbd7cf" stroke-width="4.7" fill="none" stroke-linecap="round" stroke-linejoin="round"/>
<path d="M233.0 112.0 L244.0 136.3 L264.0 162.8 L285.0 185.0" stroke="#dbd7cf" stroke-width="4.7" fill="none" stroke-linecap="round" stroke-linejoin="round"/>
<path d="M224.0 132.0 L233.0 145.0 L240.0 175.0 L242.0 194.0 L250.0 215.0" stroke="#dbd7cf" stroke-width="4.5" fill="none" stroke-linecap="round" stroke-linejoin="round"/>
<path d="M164.4 165.0 L167.0 176.0 L200.0 176.0" stroke="#dbd7cf" stroke-width="4.3" fill="none" stroke-linecap="round" stroke-linejoin="round"/>
<path d="M184.0 185.0 L195.0 216.0 L206.0 237.0" stroke="#dbd7cf" stroke-width="4.5" fill="none" stroke-linecap="round" stroke-linejoin="round"/>
<path d="M144.0 150.0 L162.0 207.0" stroke="#dbd7cf" stroke-width="4.5" fill="none" stroke-linecap="round" stroke-linejoin="round"/>
<path d="M246.0 110.0 L264.0 127.0 L277.0 140.0" stroke="#dbd7cf" stroke-width="4.5" fill="none" stroke-linecap="round" stroke-linejoin="round"/>
<path d="M210.0 135.0 L214.0 148.0" stroke="#dbd7cf" stroke-width="4.3" fill="none" stroke-linecap="round" stroke-linejoin="round"/>
<path d="M253.0 197.0 L270.0 228.0" stroke="#dbd7cf" stroke-width="4.3" fill="none" stroke-linecap="round" stroke-linejoin="round"/>
<path d="M177.6 15.8 L165.3 98.4 L160.0 112.4" stroke="#dbd7cf" stroke-width="4.7" fill="none" stroke-linecap="round" stroke-linejoin="round"/>
<path d="M188.0 19.3 L173.0 98.4 L170.5 118.0" stroke="#dbd7cf" stroke-width="4.7" fill="none" stroke-linecap="round" stroke-linejoin="round"/>
<path d="M176.7 16.7 L221.5 23.7 L246.0 73.8 L241.0 80.8 L214.4 95.8" stroke="#dbd7cf" stroke-width="4.7" fill="none" stroke-linecap="round" stroke-linejoin="round"/>
<path d="M140.0 100.0 L214.4 95.8 L263.6 82.5 L281.4 76.0" stroke="#dbd7cf" stroke-width="4.9" fill="none" stroke-linecap="round" stroke-linejoin="round"/>
<path d="M267.0 37.0 L293.5 37.0 L307.5 45.6 L311.0 52.7 L297.0 58.0 L286.5 58.0 L276.0 39.0" stroke="#dbd7cf" stroke-width="4.5" fill="none" stroke-linecap="round" stroke-linejoin="round"/>
<path d="M253.0 91.3 L268.9 115.0 L280.0 135.0" stroke="#dbd7cf" stroke-width="4.5" fill="none" stroke-linecap="round" stroke-linejoin="round"/>
<path d="M366.5 36.9 L355.1 73.7 L346.3 115.0 L340.0 140.0" stroke="#dbd7cf" stroke-width="4.7" fill="none" stroke-linecap="round" stroke-linejoin="round"/>
<path d="M418.3 57.0 L402.5 115.0 L393.0 150.0" stroke="#dbd7cf" stroke-width="4.5" fill="none" stroke-linecap="round" stroke-linejoin="round"/>
<path d="M427.0 59.7 L421.8 77.3" stroke="#dbd7cf" stroke-width="4.3" fill="none" stroke-linecap="round" stroke-linejoin="round"/>
<path d="M355.0 79.0 L421.8 93.0 L425.3 105.4 L410.0 118.0" stroke="#dbd7cf" stroke-width="4.5" fill="none" stroke-linecap="round" stroke-linejoin="round"/>
<path d="M322.0 72.0 L336.0 70.0 L343.0 72.0 L338.0 98.0 L330.0 105.0" stroke="#dbd7cf" stroke-width="4.5" fill="none" stroke-linecap="round" stroke-linejoin="round"/>
<path d="M320.0 98.0 L330.0 100.0 L344.0 115.0" stroke="#dbd7cf" stroke-width="4.3" fill="none" stroke-linecap="round" stroke-linejoin="round"/>
<path d="M68.5 115.0 L98.3 167.7 L126.4 218.6 L145.0 250.0" stroke="#dbd7cf" stroke-width="4.7" fill="none" stroke-linecap="round" stroke-linejoin="round"/>
<path d="M77.0 115.0 L88.0 125.0 L150.0 230.0" stroke="#dbd7cf" stroke-width="4.5" fill="none" stroke-linecap="round" stroke-linejoin="round"/>
<path d="M106.0 115.0 L145.0 185.0 L150.0 200.0" stroke="#dbd7cf" stroke-width="4.5" fill="none" stroke-linecap="round" stroke-linejoin="round"/>
<path d="M66.7 141.3 L107.0 115.0" stroke="#dbd7cf" stroke-width="4.5" fill="none" stroke-linecap="round" stroke-linejoin="round"/>
<path d="M112.4 216.9 L160.0 192.3" stroke="#dbd7cf" stroke-width="4.5" fill="none" stroke-linecap="round" stroke-linejoin="round"/>
<path d="M0.0 130.8 L22.8 157.2 L52.7 167.7 L51.0 152.0 L58.0 148.0" stroke="#dbd7cf" stroke-width="4.5" fill="none" stroke-linecap="round" stroke-linejoin="round"/>
<path d="M0.0 176.5 L42.0 176.5 L58.0 171.2" stroke="#dbd7cf" stroke-width="4.5" fill="none" stroke-linecap="round" stroke-linejoin="round"/>
<path d="M26.3 173.0 L14.0 230.0 L10.5 255.0" stroke="#dbd7cf" stroke-width="4.5" fill="none" stroke-linecap="round" stroke-linejoin="round"/>
<path d="M42.0 176.5 L40.0 189.0 L58.0 209.0 L67.0 230.0" stroke="#dbd7cf" stroke-width="4.5" fill="none" stroke-linecap="round" stroke-linejoin="round"/>
<path d="M17.6 209.8 L56.2 208.0" stroke="#dbd7cf" stroke-width="4.3" fill="none" stroke-linecap="round" stroke-linejoin="round"/>
<path d="M0.0 188.0 L10.0 192.0 L0.0 230.0" stroke="#dbd7cf" stroke-width="4.3" fill="none" stroke-linecap="round" stroke-linejoin="round"/>
<path d="M66.7 230.0 L105.4 288.0 L137.0 335.4 L144.0 345.0" stroke="#dbd7cf" stroke-width="4.7" fill="none" stroke-linecap="round" stroke-linejoin="round"/>
<path d="M91.3 230.0 L123.0 282.7 L160.0 342.4" stroke="#dbd7cf" stroke-width="4.7" fill="none" stroke-linecap="round" stroke-linejoin="round"/>
<path d="M0.0 274.0 L21.0 303.8 L40.4 345.0" stroke="#dbd7cf" stroke-width="4.7" fill="none" stroke-linecap="round" stroke-linejoin="round"/>
<path d="M10.5 230.0 L3.5 254.6 L14.0 258.0 L52.7 240.5 L51.0 230.0" stroke="#dbd7cf" stroke-width="4.5" fill="none" stroke-linecap="round" stroke-linejoin="round"/>
<path d="M35.0 330.0 L98.3 303.8 L121.0 284.4 L160.0 247.6" stroke="#dbd7cf" stroke-width="4.7" fill="none" stroke-linecap="round" stroke-linejoin="round"/>
<path d="M40.4 345.0 L98.3 312.5" stroke="#dbd7cf" stroke-width="4.5" fill="none" stroke-linecap="round" stroke-linejoin="round"/>
<path d="M0.0 305.0 L18.0 299.0" stroke="#dbd7cf" stroke-width="4.3" fill="none" stroke-linecap="round" stroke-linejoin="round"/>
<path d="M0.0 318.0 L20.0 312.0" stroke="#dbd7cf" stroke-width="4.3" fill="none" stroke-linecap="round" stroke-linejoin="round"/>
<path d="M128.0 291.0 L160.0 275.0" stroke="#dbd7cf" stroke-width="4.3" fill="none" stroke-linecap="round" stroke-linejoin="round"/>
<path d="M160.0 245.8 L185.0 238.0 L233.8 230.0" stroke="#dbd7cf" stroke-width="4.7" fill="none" stroke-linecap="round" stroke-linejoin="round"/>
<path d="M174.0 256.0 L211.0 335.4" stroke="#dbd7cf" stroke-width="4.5" fill="none" stroke-linecap="round" stroke-linejoin="round"/>
<path d="M188.0 253.0 L230.0 325.0" stroke="#dbd7cf" stroke-width="4.5" fill="none" stroke-linecap="round" stroke-linejoin="round"/>
<path d="M200.4 247.6 L237.3 314.3" stroke="#dbd7cf" stroke-width="4.5" fill="none" stroke-linecap="round" stroke-linejoin="round"/>
<path d="M184.6 342.4 L268.9 295.0 L320.0 273.9" stroke="#dbd7cf" stroke-width="4.7" fill="none" stroke-linecap="round" stroke-linejoin="round"/>
<path d="M265.4 230.0 L272.4 242.3" stroke="#dbd7cf" stroke-width="4.3" fill="none" stroke-linecap="round" stroke-linejoin="round"/>
<path d="M300.5 230.0 L320.0 265.0" stroke="#dbd7cf" stroke-width="4.3" fill="none" stroke-linecap="round" stroke-linejoin="round"/>
<path d="M297.0 231.8 L272.4 245.8 L260.0 258.0 L258.3 275.7 L265.4 289.7 L272.4 296.7 L283.0 335.4 L286.4 345.0" stroke="#dbd7cf" stroke-width="4.5" fill="none" stroke-linecap="round" stroke-linejoin="round"/>
<path d="M213.0 292.0 L237.0 282.0 L243.0 293.0 L220.0 304.0" stroke="#dbd7cf" stroke-width="4.3" fill="none" stroke-linecap="round" stroke-linejoin="round"/>
<path d="M320.0 143.0 L344.6 136.0" stroke="#dbd7cf" stroke-width="4.3" fill="none" stroke-linecap="round" stroke-linejoin="round"/>
<path d="M367.4 167.7 L379.7 166.0 L381.5 173.0 L355.0 185.2" stroke="#dbd7cf" stroke-width="4.5" fill="none" stroke-linecap="round" stroke-linejoin="round"/>
<path d="M399.0 115.0 L393.7 137.8" stroke="#dbd7cf" stroke-width="4.3" fill="none" stroke-linecap="round" stroke-linejoin="round"/>
<path d="M443.0 115.0 L450.0 133.0 L438.0 150.0 L441.0 160.0 L478.0 151.0" stroke="#dbd7cf" stroke-width="4.5" fill="none" stroke-linecap="round" stroke-linejoin="round"/>
<path d="M440.0 168.0 L425.0 230.0" stroke="#dbd7cf" stroke-width="4.5" fill="none" stroke-linecap="round" stroke-linejoin="round"/>
<path d="M467.0 155.0 L475.0 182.0 L453.0 192.0 L456.0 206.0 L484.0 196.0" stroke="#dbd7cf" stroke-width="4.5" fill="none" stroke-linecap="round" stroke-linejoin="round"/>
<path d="M418.0 230.0 L445.0 219.0 L484.0 196.0" stroke="#dbd7cf" stroke-width="4.3" fill="none" stroke-linecap="round" stroke-linejoin="round"/>
<path d="M320.0 277.4 L381.5 273.9" stroke="#dbd7cf" stroke-width="4.5" fill="none" stroke-linecap="round" stroke-linejoin="round"/>
<path d="M334.0 304.0 L381.0 276.0" stroke="#dbd7cf" stroke-width="4.3" fill="none" stroke-linecap="round" stroke-linejoin="round"/>
<path d="M330.0 260.0 L355.0 249.0" stroke="#dbd7cf" stroke-width="4.3" fill="none" stroke-linecap="round" stroke-linejoin="round"/>
<path d="M413.0 253.0 L443.0 304.0 L464.0 295.0 L433.0 240.0" stroke="#dbd7cf" stroke-width="4.5" fill="none" stroke-linecap="round" stroke-linejoin="round"/>
<path d="M484.0 262.0 L466.0 270.0" stroke="#dbd7cf" stroke-width="4.3" fill="none" stroke-linecap="round" stroke-linejoin="round"/>
<path d="M321.0 279.0 L326.0 345.0" stroke="#dbd7cf" stroke-width="4.3" fill="none" stroke-linecap="round" stroke-linejoin="round"/>
<path d="M336.0 277.0 L331.0 345.0" stroke="#dbd7cf" stroke-width="4.3" fill="none" stroke-linecap="round" stroke-linejoin="round"/>
<path d="M363.0 345.0 L386.0 325.0 L399.0 330.0" stroke="#dbd7cf" stroke-width="4.3" fill="none" stroke-linecap="round" stroke-linejoin="round"/>
<path d="M349.0 230.0 L381.0 282.0 L408.0 338.0" stroke="#dbd7cf" stroke-width="4.5" fill="none" stroke-linecap="round" stroke-linejoin="round"/>
<path d="M242.0 285.6 L257.9 277.7 L260.5 253.9 L268.4 246.0 L302.8 222.2 L337.1 203.7" stroke="#dbd7cf" stroke-width="4.7" fill="none" stroke-linecap="round" stroke-linejoin="round"/>
<path d="M302.8 222.2 L302.8 232.8 L326.5 277.7 L355.6 275.0" stroke="#dbd7cf" stroke-width="4.5" fill="none" stroke-linecap="round" stroke-linejoin="round"/>
<path d="M318.6 232.8 L334.5 259.2 L358.2 269.8" stroke="#dbd7cf" stroke-width="4.3" fill="none" stroke-linecap="round" stroke-linejoin="round"/>
<path d="M321.3 227.5 L337.1 224.8 L353.0 248.6 L355.6 267.1" stroke="#dbd7cf" stroke-width="4.3" fill="none" stroke-linecap="round" stroke-linejoin="round"/>
<path d="M302.8 288.2 L379.4 269.8" stroke="#dbd7cf" stroke-width="4.5" fill="none" stroke-linecap="round" stroke-linejoin="round"/>
<path d="M329.2 277.7 L321.3 345.1" stroke="#dbd7cf" stroke-width="4.5" fill="none" stroke-linecap="round" stroke-linejoin="round"/>
<path d="M342.4 277.7 L350.3 296.2 L360.9 293.5" stroke="#dbd7cf" stroke-width="4.3" fill="none" stroke-linecap="round" stroke-linejoin="round"/>
<path d="M242.0 320.0 L321.3 283.0" stroke="#dbd7cf" stroke-width="4.5" fill="none" stroke-linecap="round" stroke-linejoin="round"/>
<path d="M257.9 211.6 L284.3 246.0" stroke="#dbd7cf" stroke-width="4.3" fill="none" stroke-linecap="round" stroke-linejoin="round"/>
<path d="M400.5 214.3 L426.9 206.3 L432.2 235.4 L400.5 243.3" stroke="#dbd7cf" stroke-width="4.5" fill="none" stroke-linecap="round" stroke-linejoin="round"/>
<path d="M397.9 259.2 L426.9 251.3 L448.1 304.1 L458.6 301.5" stroke="#dbd7cf" stroke-width="4.5" fill="none" stroke-linecap="round" stroke-linejoin="round"/>
<path d="M437.5 240.7 L471.9 296.2" stroke="#dbd7cf" stroke-width="4.3" fill="none" stroke-linecap="round" stroke-linejoin="round"/>
<path d="M432.2 219.6 L485.1 198.4" stroke="#dbd7cf" stroke-width="4.5" fill="none" stroke-linecap="round" stroke-linejoin="round"/>
<path d="M426.9 172.0 L432.2 203.7" stroke="#dbd7cf" stroke-width="4.3" fill="none" stroke-linecap="round" stroke-linejoin="round"/>
<path d="M442.8 172.0 L453.4 185.2 L485.1 182.6" stroke="#dbd7cf" stroke-width="4.3" fill="none" stroke-linecap="round" stroke-linejoin="round"/>
<path d="M450.7 198.4 L458.6 203.7 L485.1 193.1" stroke="#dbd7cf" stroke-width="4.3" fill="none" stroke-linecap="round" stroke-linejoin="round"/>
<path d="M461.3 211.6 L471.9 224.8 L484.0 222.2" stroke="#dbd7cf" stroke-width="4.3" fill="none" stroke-linecap="round" stroke-linejoin="round"/>
<path d="M400.5 325.2 L432.2 335.8" stroke="#dbd7cf" stroke-width="4.3" fill="none" stroke-linecap="round" stroke-linejoin="round"/>
<path d="M358.2 327.9 L379.4 320.0 L395.2 327.9" stroke="#dbd7cf" stroke-width="4.3" fill="none" stroke-linecap="round" stroke-linejoin="round"/>
<path d="M242.0 296.2 L268.4 288.2" stroke="#dbd7cf" stroke-width="4.3" fill="none" stroke-linecap="round" stroke-linejoin="round"/>
<path d="M-20.2 10.0 L186.9 360.0" stroke="#fdfdfc" stroke-width="4.0" fill="none" stroke-linecap="round" stroke-linejoin="round"/>
<path d="M-13.4 10.0 L193.7 360.0" stroke="#fdfdfc" stroke-width="4.0" fill="none" stroke-linecap="round" stroke-linejoin="round"/>
<path d="M235.4 -10.0 L294.4 110.0 L364.4 234.0 L419.9 320.0 L440.4 360.0" stroke="#fdfdfc" stroke-width="4.0" fill="none" stroke-linecap="round" stroke-linejoin="round"/>
<path d="M244.6 -10.0 L303.6 110.0 L373.6 234.0 L429.1 320.0 L449.6 360.0" stroke="#fdfdfc" stroke-width="4.0" fill="none" stroke-linecap="round" stroke-linejoin="round"/>
<path d="M321.0 110.0 L391.0 234.0 L446.5 320.0" stroke="#fdfdfc" stroke-width="3.6" fill="none" stroke-linecap="round" stroke-linejoin="round"/>
<path d="M281.4 76.0 L300.0 66.0 L326.0 55.0 L352.0 56.4 L381.5 66.7 L434.0 82.5 L443.0 87.8 L453.5 105.4 L470.3 147.0 L490.0 180.0" stroke="#fdfdfc" stroke-width="3.8" fill="none" stroke-linecap="round" stroke-linejoin="round"/>
<path d="M439.4 230.0 L484.0 300.0" stroke="#fdfdfc" stroke-width="3.6" fill="none" stroke-linecap="round" stroke-linejoin="round"/>
<path d="M439.4 328.3 L490.0 299.0" stroke="#fdfdfc" stroke-width="3.6" fill="none" stroke-linecap="round" stroke-linejoin="round"/>
<path d="M-5.0 59.0 L100.0 -2.0" stroke="#fdfdfc" stroke-width="4.2" fill="none" stroke-linecap="round" stroke-linejoin="round"/>
<path d="M-5.0 26.0 L22.0 10.5 L16.7 -2.0" stroke="#fdfdfc" stroke-width="3.6" fill="none" stroke-linecap="round" stroke-linejoin="round"/>
<path d="M-5.0 95.0 L21.0 84.3" stroke="#fdfdfc" stroke-width="3.4" fill="none" stroke-linecap="round" stroke-linejoin="round"/>
<path d="M160.0 0.9 L242.5 17.4" stroke="#fdfdfc" stroke-width="3.8" fill="none" stroke-linecap="round" stroke-linejoin="round"/>
<path d="M89.6 0.0 L108.9 33.4 L130.0 37.8 L154.5 50.0 L170.0 55.0" stroke="#fdfdfc" stroke-width="3.6" fill="none" stroke-linecap="round" stroke-linejoin="round"/>
<path d="M24.6 14.9 L75.5 115.0 L98.0 150.0" stroke="#fdfdfc" stroke-width="3.4" fill="none" stroke-linecap="round" stroke-linejoin="round"/>
<path d="M52.7 45.7 L84.3 28.1" stroke="#fdfdfc" stroke-width="3.2" fill="none" stroke-linecap="round" stroke-linejoin="round"/>
<path d="M84.3 51.0 L108.9 34.2" stroke="#fdfdfc" stroke-width="3.2" fill="none" stroke-linecap="round" stroke-linejoin="round"/>
<path d="M51.0 48.0 L52.0 58.0 L62.0 69.0 L75.5 75.0" stroke="#fdfdfc" stroke-width="3.2" fill="none" stroke-linecap="round" stroke-linejoin="round"/>
<path d="M75.5 75.0 L91.0 69.0 L86.0 53.0 L74.0 35.0" stroke="#fdfdfc" stroke-width="3.2" fill="none" stroke-linecap="round" stroke-linejoin="round"/>
<path d="M49.0 77.3 L70.2 70.2" stroke="#fdfdfc" stroke-width="3.2" fill="none" stroke-linecap="round" stroke-linejoin="round"/>
<path d="M75.5 75.5 L98.3 115.0 L125.0 160.0" stroke="#fdfdfc" stroke-width="3.2" fill="none" stroke-linecap="round" stroke-linejoin="round"/>
<path d="M141.4 22.8 L123.0 66.7 L110.0 95.0" stroke="#fdfdfc" stroke-width="3.4" fill="none" stroke-linecap="round" stroke-linejoin="round"/>
<path d="M109.0 35.0 L110.0 51.0 L124.0 54.0" stroke="#fdfdfc" stroke-width="3.0" fill="none" stroke-linecap="round" stroke-linejoin="round"/>
<path d="M123.0 91.3 L160.0 94.8" stroke="#fdfdfc" stroke-width="3.2" fill="none" stroke-linecap="round" stroke-linejoin="round"/>
<path d="M140.0 123.0 L193.0 95.0" stroke="#fdfdfc" stroke-width="3.4" fill="none" stroke-linecap="round" stroke-linejoin="round"/>
<path d="M140.0 151.8 L226.3 130.7" stroke="#fdfdfc" stroke-width="3.2" fill="none" stroke-linecap="round" stroke-linejoin="round"/>
<path d="M164.4 165.0 L200.0 152.0 L237.4 142.9 L244.0 148.0" stroke="#fdfdfc" stroke-width="3.2" fill="none" stroke-linecap="round" stroke-linejoin="round"/>
<path d="M140.0 187.2 L186.5 176.1" stroke="#fdfdfc" stroke-width="3.2" fill="none" stroke-linecap="round" stroke-linejoin="round"/>
<path d="M162.0 196.0 L244.0 180.6" stroke="#fdfdfc" stroke-width="3.2" fill="none" stroke-linecap="round" stroke-linejoin="round"/>
<path d="M162.0 216.0 L285.0 185.0" stroke="#fdfdfc" stroke-width="3.4" fill="none" stroke-linecap="round" stroke-linejoin="round"/>
<path d="M195.0 221.0 L262.0 205.0" stroke="#fdfdfc" stroke-width="3.2" fill="none" stroke-linecap="round" stroke-linejoin="round"/>
<path d="M153.3 92.0 L171.0 105.3 L206.4 118.6 L228.6 127.4 L240.0 118.0 L233.0 110.0" stroke="#fdfdfc" stroke-width="3.4" fill="none" stroke-linecap="round" stroke-linejoin="round"/>
<path d="M233.0 112.0 L244.0 136.3 L264.0 162.8 L285.0 185.0" stroke="#fdfdfc" stroke-width="3.4" fill="none" stroke-linecap="round" stroke-linejoin="round"/>
<path d="M224.0 132.0 L233.0 145.0 L240.0 175.0 L242.0 194.0 L250.0 215.0" stroke="#fdfdfc" stroke-width="3.2" fill="none" stroke-linecap="round" stroke-linejoin="round"/>
<path d="M164.4 165.0 L167.0 176.0 L200.0 176.0" stroke="#fdfdfc" stroke-width="3.0" fill="none" stroke-linecap="round" stroke-linejoin="round"/>
<path d="M184.0 185.0 L195.0 216.0 L206.0 237.0" stroke="#fdfdfc" stroke-width="3.2" fill="none" stroke-linecap="round" stroke-linejoin="round"/>
<path d="M144.0 150.0 L162.0 207.0" stroke="#fdfdfc" stroke-width="3.2" fill="none" stroke-linecap="round" stroke-linejoin="round"/>
<path d="M246.0 110.0 L264.0 127.0 L277.0 140.0" stroke="#fdfdfc" stroke-width="3.2" fill="none" stroke-linecap="round" stroke-linejoin="round"/>
<path d="M210.0 135.0 L214.0 148.0" stroke="#fdfdfc" stroke-width="3.0" fill="none" stroke-linecap="round" stroke-linejoin="round"/>
<path d="M253.0 197.0 L270.0 228.0" stroke="#fdfdfc" stroke-width="3.0" fill="none" stroke-linecap="round" stroke-linejoin="round"/>
<path d="M177.6 15.8 L165.3 98.4 L160.0 112.4" stroke="#fdfdfc" stroke-width="3.4" fill="none" stroke-linecap="round" stroke-linejoin="round"/>
<path d="M188.0 19.3 L173.0 98.4 L170.5 118.0" stroke="#fdfdfc" stroke-width="3.4" fill="none" stroke-linecap="round" stroke-linejoin="round"/>
<path d="M176.7 16.7 L221.5 23.7 L246.0 73.8 L241.0 80.8 L214.4 95.8" stroke="#fdfdfc" stroke-width="3.4" fill="none" stroke-linecap="round" stroke-linejoin="round"/>
<path d="M140.0 100.0 L214.4 95.8 L263.6 82.5 L281.4 76.0" stroke="#fdfdfc" stroke-width="3.6" fill="none" stroke-linecap="round" stroke-linejoin="round"/>
<path d="M267.0 37.0 L293.5 37.0 L307.5 45.6 L311.0 52.7 L297.0 58.0 L286.5 58.0 L276.0 39.0" stroke="#fdfdfc" stroke-width="3.2" fill="none" stroke-linecap="round" stroke-linejoin="round"/>
<path d="M253.0 91.3 L268.9 115.0 L280.0 135.0" stroke="#fdfdfc" stroke-width="3.2" fill="none" stroke-linecap="round" stroke-linejoin="round"/>
<path d="M366.5 36.9 L355.1 73.7 L346.3 115.0 L340.0 140.0" stroke="#fdfdfc" stroke-width="3.4" fill="none" stroke-linecap="round" stroke-linejoin="round"/>
<path d="M418.3 57.0 L402.5 115.0 L393.0 150.0" stroke="#fdfdfc" stroke-width="3.2" fill="none" stroke-linecap="round" stroke-linejoin="round"/>
<path d="M427.0 59.7 L421.8 77.3" stroke="#fdfdfc" stroke-width="3.0" fill="none" stroke-linecap="round" stroke-linejoin="round"/>
<path d="M355.0 79.0 L421.8 93.0 L425.3 105.4 L410.0 118.0" stroke="#fdfdfc" stroke-width="3.2" fill="none" stroke-linecap="round" stroke-linejoin="round"/>
<path d="M322.0 72.0 L336.0 70.0 L343.0 72.0 L338.0 98.0 L330.0 105.0" stroke="#fdfdfc" stroke-width="3.2" fill="none" stroke-linecap="round" stroke-linejoin="round"/>
<path d="M320.0 98.0 L330.0 100.0 L344.0 115.0" stroke="#fdfdfc" stroke-width="3.0" fill="none" stroke-linecap="round" stroke-linejoin="round"/>
<path d="M68.5 115.0 L98.3 167.7 L126.4 218.6 L145.0 250.0" stroke="#fdfdfc" stroke-width="3.4" fill="none" stroke-linecap="round" stroke-linejoin="round"/>
<path d="M77.0 115.0 L88.0 125.0 L150.0 230.0" stroke="#fdfdfc" stroke-width="3.2" fill="none" stroke-linecap="round" stroke-linejoin="round"/>
<path d="M106.0 115.0 L145.0 185.0 L150.0 200.0" stroke="#fdfdfc" stroke-width="3.2" fill="none" stroke-linecap="round" stroke-linejoin="round"/>
<path d="M66.7 141.3 L107.0 115.0" stroke="#fdfdfc" stroke-width="3.2" fill="none" stroke-linecap="round" stroke-linejoin="round"/>
<path d="M112.4 216.9 L160.0 192.3" stroke="#fdfdfc" stroke-width="3.2" fill="none" stroke-linecap="round" stroke-linejoin="round"/>
<path d="M0.0 130.8 L22.8 157.2 L52.7 167.7 L51.0 152.0 L58.0 148.0" stroke="#fdfdfc" stroke-width="3.2" fill="none" stroke-linecap="round" stroke-linejoin="round"/>
<path d="M0.0 176.5 L42.0 176.5 L58.0 171.2" stroke="#fdfdfc" stroke-width="3.2" fill="none" stroke-linecap="round" stroke-linejoin="round"/>
<path d="M26.3 173.0 L14.0 230.0 L10.5 255.0" stroke="#fdfdfc" stroke-width="3.2" fill="none" stroke-linecap="round" stroke-linejoin="round"/>
<path d="M42.0 176.5 L40.0 189.0 L58.0 209.0 L67.0 230.0" stroke="#fdfdfc" stroke-width="3.2" fill="none" stroke-linecap="round" stroke-linejoin="round"/>
<path d="M17.6 209.8 L56.2 208.0" stroke="#fdfdfc" stroke-width="3.0" fill="none" stroke-linecap="round" stroke-linejoin="round"/>
<path d="M0.0 188.0 L10.0 192.0 L0.0 230.0" stroke="#fdfdfc" stroke-width="3.0" fill="none" stroke-linecap="round" stroke-linejoin="round"/>
<path d="M66.7 230.0 L105.4 288.0 L137.0 335.4 L144.0 345.0" stroke="#fdfdfc" stroke-width="3.4" fill="none" stroke-linecap="round" stroke-linejoin="round"/>
<path d="M91.3 230.0 L123.0 282.7 L160.0 342.4" stroke="#fdfdfc" stroke-width="3.4" fill="none" stroke-linecap="round" stroke-linejoin="round"/>
<path d="M0.0 274.0 L21.0 303.8 L40.4 345.0" stroke="#fdfdfc" stroke-width="3.4" fill="none" stroke-linecap="round" stroke-linejoin="round"/>
<path d="M10.5 230.0 L3.5 254.6 L14.0 258.0 L52.7 240.5 L51.0 230.0" stroke="#fdfdfc" stroke-width="3.2" fill="none" stroke-linecap="round" stroke-linejoin="round"/>
<path d="M35.0 330.0 L98.3 303.8 L121.0 284.4 L160.0 247.6" stroke="#fdfdfc" stroke-width="3.4" fill="none" stroke-linecap="round" stroke-linejoin="round"/>
<path d="M40.4 345.0 L98.3 312.5" stroke="#fdfdfc" stroke-width="3.2" fill="none" stroke-linecap="round" stroke-linejoin="round"/>
<path d="M0.0 305.0 L18.0 299.0" stroke="#fdfdfc" stroke-width="3.0" fill="none" stroke-linecap="round" stroke-linejoin="round"/>
<path d="M0.0 318.0 L20.0 312.0" stroke="#fdfdfc" stroke-width="3.0" fill="none" stroke-linecap="round" stroke-linejoin="round"/>
<path d="M128.0 291.0 L160.0 275.0" stroke="#fdfdfc" stroke-width="3.0" fill="none" stroke-linecap="round" stroke-linejoin="round"/>
<path d="M160.0 245.8 L185.0 238.0 L233.8 230.0" stroke="#fdfdfc" stroke-width="3.4" fill="none" stroke-linecap="round" stroke-linejoin="round"/>
<path d="M174.0 256.0 L211.0 335.4" stroke="#fdfdfc" stroke-width="3.2" fill="none" stroke-linecap="round" stroke-linejoin="round"/>
<path d="M188.0 253.0 L230.0 325.0" stroke="#fdfdfc" stroke-width="3.2" fill="none" stroke-linecap="round" stroke-linejoin="round"/>
<path d="M200.4 247.6 L237.3 314.3" stroke="#fdfdfc" stroke-width="3.2" fill="none" stroke-linecap="round" stroke-linejoin="round"/>
<path d="M184.6 342.4 L268.9 295.0 L320.0 273.9" stroke="#fdfdfc" stroke-width="3.4" fill="none" stroke-linecap="round" stroke-linejoin="round"/>
<path d="M265.4 230.0 L272.4 242.3" stroke="#fdfdfc" stroke-width="3.0" fill="none" stroke-linecap="round" stroke-linejoin="round"/>
<path d="M300.5 230.0 L320.0 265.0" stroke="#fdfdfc" stroke-width="3.0" fill="none" stroke-linecap="round" stroke-linejoin="round"/>
<path d="M297.0 231.8 L272.4 245.8 L260.0 258.0 L258.3 275.7 L265.4 289.7 L272.4 296.7 L283.0 335.4 L286.4 345.0" stroke="#fdfdfc" stroke-width="3.2" fill="none" stroke-linecap="round" stroke-linejoin="round"/>
<path d="M213.0 292.0 L237.0 282.0 L243.0 293.0 L220.0 304.0" stroke="#fdfdfc" stroke-width="3.0" fill="none" stroke-linecap="round" stroke-linejoin="round"/>
<path d="M320.0 143.0 L344.6 136.0" stroke="#fdfdfc" stroke-width="3.0" fill="none" stroke-linecap="round" stroke-linejoin="round"/>
<path d="M367.4 167.7 L379.7 166.0 L381.5 173.0 L355.0 185.2" stroke="#fdfdfc" stroke-width="3.2" fill="none" stroke-linecap="round" stroke-linejoin="round"/>
<path d="M399.0 115.0 L393.7 137.8" stroke="#fdfdfc" stroke-width="3.0" fill="none" stroke-linecap="round" stroke-linejoin="round"/>
<path d="M443.0 115.0 L450.0 133.0 L438.0 150.0 L441.0 160.0 L478.0 151.0" stroke="#fdfdfc" stroke-width="3.2" fill="none" stroke-linecap="round" stroke-linejoin="round"/>
<path d="M440.0 168.0 L425.0 230.0" stroke="#fdfdfc" stroke-width="3.2" fill="none" stroke-linecap="round" stroke-linejoin="round"/>
<path d="M467.0 155.0 L475.0 182.0 L453.0 192.0 L456.0 206.0 L484.0 196.0" stroke="#fdfdfc" stroke-width="3.2" fill="none" stroke-linecap="round" stroke-linejoin="round"/>
<path d="M418.0 230.0 L445.0 219.0 L484.0 196.0" stroke="#fdfdfc" stroke-width="3.0" fill="none" stroke-linecap="round" stroke-linejoin="round"/>
<path d="M320.0 277.4 L381.5 273.9" stroke="#fdfdfc" stroke-width="3.2" fill="none" stroke-linecap="round" stroke-linejoin="round"/>
<path d="M334.0 304.0 L381.0 276.0" stroke="#fdfdfc" stroke-width="3.0" fill="none" stroke-linecap="round" stroke-linejoin="round"/>
<path d="M330.0 260.0 L355.0 249.0" stroke="#fdfdfc" stroke-width="3.0" fill="none" stroke-linecap="round" stroke-linejoin="round"/>
<path d="M413.0 253.0 L443.0 304.0 L464.0 295.0 L433.0 240.0" stroke="#fdfdfc" stroke-width="3.2" fill="none" stroke-linecap="round" stroke-linejoin="round"/>
<path d="M484.0 262.0 L466.0 270.0" stroke="#fdfdfc" stroke-width="3.0" fill="none" stroke-linecap="round" stroke-linejoin="round"/>
<path d="M321.0 279.0 L326.0 345.0" stroke="#fdfdfc" stroke-width="3.0" fill="none" stroke-linecap="round" stroke-linejoin="round"/>
<path d="M336.0 277.0 L331.0 345.0" stroke="#fdfdfc" stroke-width="3.0" fill="none" stroke-linecap="round" stroke-linejoin="round"/>
<path d="M363.0 345.0 L386.0 325.0 L399.0 330.0" stroke="#fdfdfc" stroke-width="3.0" fill="none" stroke-linecap="round" stroke-linejoin="round"/>
<path d="M349.0 230.0 L381.0 282.0 L408.0 338.0" stroke="#fdfdfc" stroke-width="3.2" fill="none" stroke-linecap="round" stroke-linejoin="round"/>
<path d="M242.0 285.6 L257.9 277.7 L260.5 253.9 L268.4 246.0 L302.8 222.2 L337.1 203.7" stroke="#fdfdfc" stroke-width="3.4" fill="none" stroke-linecap="round" stroke-linejoin="round"/>
<path d="M302.8 222.2 L302.8 232.8 L326.5 277.7 L355.6 275.0" stroke="#fdfdfc" stroke-width="3.2" fill="none" stroke-linecap="round" stroke-linejoin="round"/>
<path d="M318.6 232.8 L334.5 259.2 L358.2 269.8" stroke="#fdfdfc" stroke-width="3.0" fill="none" stroke-linecap="round" stroke-linejoin="round"/>
<path d="M321.3 227.5 L337.1 224.8 L353.0 248.6 L355.6 267.1" stroke="#fdfdfc" stroke-width="3.0" fill="none" stroke-linecap="round" stroke-linejoin="round"/>
<path d="M302.8 288.2 L379.4 269.8" stroke="#fdfdfc" stroke-width="3.2" fill="none" stroke-linecap="round" stroke-linejoin="round"/>
<path d="M329.2 277.7 L321.3 345.1" stroke="#fdfdfc" stroke-width="3.2" fill="none" stroke-linecap="round" stroke-linejoin="round"/>
<path d="M342.4 277.7 L350.3 296.2 L360.9 293.5" stroke="#fdfdfc" stroke-width="3.0" fill="none" stroke-linecap="round" stroke-linejoin="round"/>
<path d="M242.0 320.0 L321.3 283.0" stroke="#fdfdfc" stroke-width="3.2" fill="none" stroke-linecap="round" stroke-linejoin="round"/>
<path d="M257.9 211.6 L284.3 246.0" stroke="#fdfdfc" stroke-width="3.0" fill="none" stroke-linecap="round" stroke-linejoin="round"/>
<path d="M400.5 214.3 L426.9 206.3 L432.2 235.4 L400.5 243.3" stroke="#fdfdfc" stroke-width="3.2" fill="none" stroke-linecap="round" stroke-linejoin="round"/>
<path d="M397.9 259.2 L426.9 251.3 L448.1 304.1 L458.6 301.5" stroke="#fdfdfc" stroke-width="3.2" fill="none" stroke-linecap="round" stroke-linejoin="round"/>
<path d="M437.5 240.7 L471.9 296.2" stroke="#fdfdfc" stroke-width="3.0" fill="none" stroke-linecap="round" stroke-linejoin="round"/>
<path d="M432.2 219.6 L485.1 198.4" stroke="#fdfdfc" stroke-width="3.2" fill="none" stroke-linecap="round" stroke-linejoin="round"/>
<path d="M426.9 172.0 L432.2 203.7" stroke="#fdfdfc" stroke-width="3.0" fill="none" stroke-linecap="round" stroke-linejoin="round"/>
<path d="M442.8 172.0 L453.4 185.2 L485.1 182.6" stroke="#fdfdfc" stroke-width="3.0" fill="none" stroke-linecap="round" stroke-linejoin="round"/>
<path d="M450.7 198.4 L458.6 203.7 L485.1 193.1" stroke="#fdfdfc" stroke-width="3.0" fill="none" stroke-linecap="round" stroke-linejoin="round"/>
<path d="M461.3 211.6 L471.9 224.8 L484.0 222.2" stroke="#fdfdfc" stroke-width="3.0" fill="none" stroke-linecap="round" stroke-linejoin="round"/>
<path d="M400.5 325.2 L432.2 335.8" stroke="#fdfdfc" stroke-width="3.0" fill="none" stroke-linecap="round" stroke-linejoin="round"/>
<path d="M358.2 327.9 L379.4 320.0 L395.2 327.9" stroke="#fdfdfc" stroke-width="3.0" fill="none" stroke-linecap="round" stroke-linejoin="round"/>
<path d="M242.0 296.2 L268.4 288.2" stroke="#fdfdfc" stroke-width="3.0" fill="none" stroke-linecap="round" stroke-linejoin="round"/>
<text x="0.0" y="14.0" font-size="6.3" fill="#444" stroke="#f4f2ee" stroke-width="1.8" paint-order="stroke">hell</text>
<text x="90.5" y="72.0" font-size="6.3" fill="#444" stroke="#f4f2ee" stroke-width="1.8" paint-order="stroke">Sredvnyaya...</text>
<text x="84.0" y="78.6" font-size="6.3" fill="#444" stroke="#f4f2ee" stroke-width="1.8" paint-order="stroke">Школа № 578</text>
<text x="224.0" y="49.5" font-size="6.3" fill="#3b4a6b" stroke="#f4f2ee" stroke-width="1.8" paint-order="stroke">Газпромнефть АЗС №35</text>
<text x="367.5" y="140.0" font-size="6.3" fill="#444" stroke="#f4f2ee" stroke-width="1.8" paint-order="stroke">Shkola №595</text>
<text x="365.0" y="146.2" font-size="6.3" fill="#444" stroke="#f4f2ee" stroke-width="1.8" paint-order="stroke">Школа № 595</text>
<text x="266.0" y="115.5" font-size="6.3" fill="#9b4c3a" stroke="#f4f2ee" stroke-width="1.8" paint-order="stroke">Bekhterev</text>
<text x="263.0" y="121.8" font-size="6.3" fill="#9b4c3a" stroke="#f4f2ee" stroke-width="1.8" paint-order="stroke">Бехтерев</text>
<text x="254.0" y="173.2" font-size="6.3" fill="#444" stroke="#f4f2ee" stroke-width="1.8" paint-order="stroke">Zdorovye,</text>
<text x="254.0" y="179.6" font-size="6.3" fill="#9b4c3a" stroke="#f4f2ee" stroke-width="1.8" paint-order="stroke">Meditsinskiy Tsentr</text>
<text x="254.0" y="186.0" font-size="6.3" fill="#444" stroke="#f4f2ee" stroke-width="1.8" paint-order="stroke">Здоровье,</text>
<text x="254.0" y="192.4" font-size="6.3" fill="#9b4c3a" stroke="#f4f2ee" stroke-width="1.8" paint-order="stroke">Медицинский Центр</text>
<text x="174.0" y="193.5" font-size="6.3" fill="#444" stroke="#f4f2ee" stroke-width="1.8" paint-order="stroke">Клиника "АБИА"</text>
<text x="89.5" y="204.0" font-size="6.3" fill="#444" stroke="#f4f2ee" stroke-width="1.8" paint-order="stroke">Tsentrobuv', Magazin</text>
<text x="84.3" y="210.4" font-size="6.3" fill="#444" stroke="#f4f2ee" stroke-width="1.8" paint-order="stroke">Центробувь, Магазин</text>
<text x="174.0" y="233.5" font-size="6.3" fill="#444" stroke="#f4f2ee" stroke-width="1.8" paint-order="stroke">Перекресток</text>
<text x="55.3" y="296.2" font-size="6.3" fill="#444" stroke="#f4f2ee" stroke-width="1.8" paint-order="stroke">Komendantskiy, 34</text>
<text x="51.0" y="302.6" font-size="6.3" fill="#444" stroke="#f4f2ee" stroke-width="1.8" paint-order="stroke">Комендантский, 34</text>
<text x="0" y="0" font-size="6.3" fill="#444" transform="translate(54.0 140.0) rotate(60.0)" stroke="#f4f2ee" stroke-width="1.6" paint-order="stroke">Komendantskiy pr.</text>
<text x="0" y="0" font-size="6.3" fill="#444" transform="translate(122.0 253.0) rotate(60.0)" stroke="#f4f2ee" stroke-width="1.6" paint-order="stroke">Komendantskiy pr.</text>
<text x="0" y="0" font-size="6.3" fill="#444" transform="translate(226.0 -1.0) rotate(62.0)" stroke="#f4f2ee" stroke-width="1.6" paint-order="stroke">pr. Korolyova</text>
<text x="0" y="0" font-size="6.3" fill="#444" transform="translate(252.0 52.0) rotate(58.0)" stroke="#f4f2ee" stroke-width="1.6" paint-order="stroke">pr. Korolyova</text>
<text x="0" y="0" font-size="6.3" fill="#444" transform="translate(289.0 82.0) rotate(58.0)" stroke="#f4f2ee" stroke-width="1.6" paint-order="stroke">пр. Королёва</text>
<text x="0" y="0" font-size="6.3" fill="#444" transform="translate(316.0 150.0) rotate(58.0)" stroke="#f4f2ee" stroke-width="1.6" paint-order="stroke">pr. Korolyova</text>
<text x="0" y="0" font-size="6.3" fill="#444" transform="translate(356.0 195.0) rotate(58.0)" stroke="#f4f2ee" stroke-width="1.6" paint-order="stroke">пр. Королёва</text>
<text x="0" y="0" font-size="6.3" fill="#444" transform="translate(350.0 224.0) rotate(58.0)" stroke="#f4f2ee" stroke-width="1.6" paint-order="stroke">pr. Korolyova</text>
<text x="0" y="0" font-size="6.3" fill="#444" transform="translate(386.0 264.0) rotate(58.0)" stroke="#f4f2ee" stroke-width="1.6" paint-order="stroke">pr. Korolyova</text>
<text x="0" y="0" font-size="6.3" fill="#444" transform="translate(293.0 72.0) rotate(-26.0)" stroke="#f4f2ee" stroke-width="1.6" paint-order="stroke">ul. Shavrova</text>
<text x="0" y="0" font-size="6.3" fill="#444" transform="translate(345.0 53.0) rotate(17.0)" stroke="#f4f2ee" stroke-width="1.6" paint-order="stroke">ul. Shavrova</text>
<text x="0" y="0" font-size="6.3" fill="#444" transform="translate(403.0 70.0) rotate(20.0)" stroke="#f4f2ee" stroke-width="1.6" paint-order="stroke">ul. Shavrova</text>
<text x="0" y="0" font-size="6.3" fill="#444" transform="translate(446.0 92.0) rotate(64.0)" stroke="#f4f2ee" stroke-width="1.6" paint-order="stroke">Martynovskaya ul.</text>
<text x="0" y="0" font-size="6.3" fill="#444" transform="translate(446.0 318.0) rotate(-27.0)" stroke="#f4f2ee" stroke-width="1.6" paint-order="stroke">Martynovskaya ul.</text>
<rect x="7.4" y="39.9" width="4.6" height="4.6" rx="1" fill="#31a7e7" stroke="#fff" stroke-width="0.7"/>
<rect x="23.2" y="42.5" width="4.6" height="4.6" rx="1" fill="#31a7e7" stroke="#fff" stroke-width="0.7"/>
<rect x="5.6" y="64.1" width="4.6" height="4.6" rx="1" fill="#31a7e7" stroke="#fff" stroke-width="0.7"/>
<rect x="276.7" y="54.7" width="4.6" height="4.6" rx="1" fill="#31a7e7" stroke="#fff" stroke-width="0.7"/>
<rect x="284.1" y="93.0" width="4.6" height="4.6" rx="1" fill="#31a7e7" stroke="#fff" stroke-width="0.7"/>
<rect x="345.2" y="165.2" width="4.6" height="4.6" rx="1" fill="#31a7e7" stroke="#fff" stroke-width="0.7"/>
<rect x="353.2" y="178.3" width="4.6" height="4.6" rx="1" fill="#31a7e7" stroke="#fff" stroke-width="0.7"/>
<rect x="342.7" y="196.7" width="4.6" height="4.6" rx="1" fill="#31a7e7" stroke="#fff" stroke-width="0.7"/>
<rect x="119.2" y="230.5" width="4.6" height="4.6" rx="1" fill="#31a7e7" stroke="#fff" stroke-width="0.7"/>
<rect x="119.2" y="256.4" width="4.6" height="4.6" rx="1" fill="#31a7e7" stroke="#fff" stroke-width="0.7"/>
<circle cx="291.0" cy="51.0" r="2" fill="#fff"/><circle cx="291.0" cy="51.0" r="1" fill="#3b5aa0"/>
<circle cx="285.0" cy="120.0" r="2" fill="#fff"/><circle cx="285.0" cy="120.0" r="1" fill="#e05a4a"/>
<circle cx="244.0" cy="186.0" r="2" fill="#fff"/><circle cx="244.0" cy="186.0" r="1" fill="#e05a4a"/>
<circle cx="226.0" cy="193.0" r="2" fill="#fff"/><circle cx="226.0" cy="193.0" r="1" fill="#e05a4a"/>
<circle cx="233.0" cy="172.0" r="2" fill="#fff"/><circle cx="233.0" cy="172.0" r="1" fill="#555"/>
<circle cx="124.0" cy="212.0" r="2" fill="#fff"/><circle cx="124.0" cy="212.0" r="1" fill="#3b5aa0"/>
<circle cx="164.0" cy="230.7" r="2" fill="#fff"/><circle cx="164.0" cy="230.7" r="1" fill="#3b5aa0"/>
<circle cx="108.0" cy="303.0" r="2" fill="#fff"/><circle cx="108.0" cy="303.0" r="1" fill="#9b4c3a"/>
<circle cx="127.0" cy="77.0" r="2" fill="#fff"/><circle cx="127.0" cy="77.0" r="1" fill="#555"/>
<circle cx="407.0" cy="145.0" r="2" fill="#fff"/><circle cx="407.0" cy="145.0" r="1" fill="#555"/>
<circle cx="212.3" cy="164.4" r="68.1" fill="rgba(65,181,231,0.30)" stroke="#3aa8e0" stroke-width="1"/>
<text x="200.6" y="173" font-size="6.3" fill="#444" stroke="#cfe3ee" stroke-width="1.4" paint-order="stroke">Fitness</text>
<circle cx="212.5" cy="149.7" r="5.9" fill="#fff"/>
<circle cx="212.5" cy="149.7" r="5" fill="#fff" stroke="#f2600f" stroke-width="1.5"/>
<circle cx="212.5" cy="164" r="11.4" fill="#fff"/>
<circle cx="212.5" cy="164" r="10.4" fill="#e0332a"/>
<path d="M212.5 164 L202.6 161.3 A10.4 10.4 0 0 1 212.0 153.6 Z" fill="#1d9be0" stroke="#fff" stroke-width="0.9"/>
<path d="M212.5 164 L212.5 153.2" stroke="#fff" stroke-width="0.9"/>
<circle cx="212.5" cy="164" r="3" fill="#fff"/>
<circle cx="212.5" cy="163" r="0.9" fill="#f07030"/>
<text x="207.3" y="161.3" font-size="5.5" fill="#fff" font-weight="bold">1</text>
<text x="214.8" y="171.6" font-size="5.5" fill="#fff" font-weight="bold">4</text>

<text x="2.5" y="341.5" font-size="11" fill="#4285f4" letter-spacing="-0.2" stroke="#fff" stroke-width="0.8" paint-order="stroke">G<tspan fill="#ea4335">o</tspan><tspan fill="#fbbc05">o</tspan><tspan fill="#4285f4">g</tspan><tspan fill="#34a853">l</tspan><tspan fill="#ea4335">e</tspan></text>
<rect x="300" y="336" width="184" height="9" fill="rgba(245,243,238,0.7)"/>
<text x="304.5" y="343.5" font-size="6.2" fill="#333">Map data ©2016 Google</text>
<text x="382" y="343.5" font-size="6.2" fill="#333">Terms of Use</text>
<text x="427" y="343.5" font-size="6.2" fill="#333">Report a map error</text>
<rect x="432" y="5" width="46" height="16" fill="rgba(255,255,255,0.55)"/>
<path d="M433 5v7h45v-7M433 21v-8h36v8M433 12.5h45" stroke="#555" stroke-width="0.8" fill="none"/>
<text x="435.5" y="11.5" font-size="6.4" fill="#333">100 m</text>
<text x="435.5" y="19.5" font-size="6.4" fill="#333">300 ft</text>
<rect x="445" y="27" width="33" height="14.5" fill="#29abe2"/>
<path d="M449.5 34l9-4l-4 9l-1-4z" fill="#fff"/>
<path d="M467 29.5v10" stroke="#fff" stroke-width="0.9"/>
<path d="M470.5 33.5h4l-2 2.2z" fill="#fff"/>
</svg>
<div class="a sb" style="left:386px;top:521px;width:484px;height:20px"></div>
<svg class="a" style="left:386px;top:521px" width="484" height="20">
 <g fill="none" stroke="#c3c5cc" stroke-width="1.05">
  <circle cx="19" cy="10.5" r="8.6"/><circle cx="47" cy="10.5" r="8.6"/><circle cx="75" cy="10.5" r="8.6"/><circle cx="103" cy="10.5" r="8.6"/>
  <path d="M15 5v10h9" stroke-width="1.6"/>
  <rect x="44.5" y="4.5" width="5" height="12" rx="2.5"/><circle cx="47" cy="7.5" r="1"/><circle cx="47" cy="10.5" r="1"/><circle cx="47" cy="13.5" r="1"/>
  <circle cx="79" cy="6.5" r="1.5"/><circle cx="71" cy="10.5" r="1.5"/><circle cx="79" cy="14.5" r="1.5"/><path d="M72.5 9.8l5-2.5M72.5 11.2l5 2.5"/>
  <path d="M103 16.5c-2.5-3.5-4-5.5-4-7.5a4 4 0 0 1 8 0c0 2-1.5 4-4 7.5z"/><circle cx="103" cy="9" r="1.4"/>
  <circle cx="217" cy="10" r="3.6"/><path d="M215 10h4M219.8 12.8l2 2"/>
  <circle cx="272" cy="10" r="6"/><path d="M269 10h6M272 7v6M276.3 14.3l2.5 2.5" stroke-width="1.1"/>
  <circle cx="386.5" cy="10.5" r="8.6"/><circle cx="414.5" cy="10.5" r="8.6"/><circle cx="443" cy="10.5" r="8.6"/><circle cx="470" cy="10.5" r="8.6"/>
  <path d="M383 7h7v7h-7zM386.5 5v2"/>
  <path d="M414.5 5.5l5 3.6l-1.9 5.9h-6.2l-1.9-5.9z"/>
  <path d="M443 6l5 2.5l-5 2.5l-5-2.5zM438 11l5 2.5l5-2.5M438 13.5l5 2.5l5-2.5"/>
  <rect x="466" y="7" width="7" height="7"/><rect x="468" y="9" width="3" height="3"/>
 </g>
 <rect x="225.5" y="8" width="38" height="4.6" fill="#8f919b"/>
 <rect x="252" y="6.4" width="3" height="7.8" fill="#fff"/>
 <rect x="292.5" y="3.5" width="79" height="13" fill="none" stroke="#b9bbc3" stroke-width="0.9"/>
 <text x="295" y="13" font-size="7.5" fill="#cfd1d6">Enter address or its</text>
 <path d="M365 7.5l2.5 3l-2.5 3" stroke="#c6c8ce" stroke-width="0.9" fill="none"/>
 <text x="126" y="13.2" font-size="7" fill="#fff" font-weight="bold">Map 1</text>
 <text x="150.2" y="13.4" font-size="7" fill="#a9abb4">2</text><text x="159.4" y="13.4" font-size="7" fill="#a9abb4">3</text><text x="168.6" y="13.4" font-size="7" fill="#a9abb4">4</text><text x="177.8" y="13.4" font-size="7" fill="#a9abb4">5</text><text x="187.0" y="13.4" font-size="7" fill="#a9abb4">6</text><text x="196.2" y="13.4" font-size="7" fill="#a9abb4">7</text>
</svg>
</body></html>
